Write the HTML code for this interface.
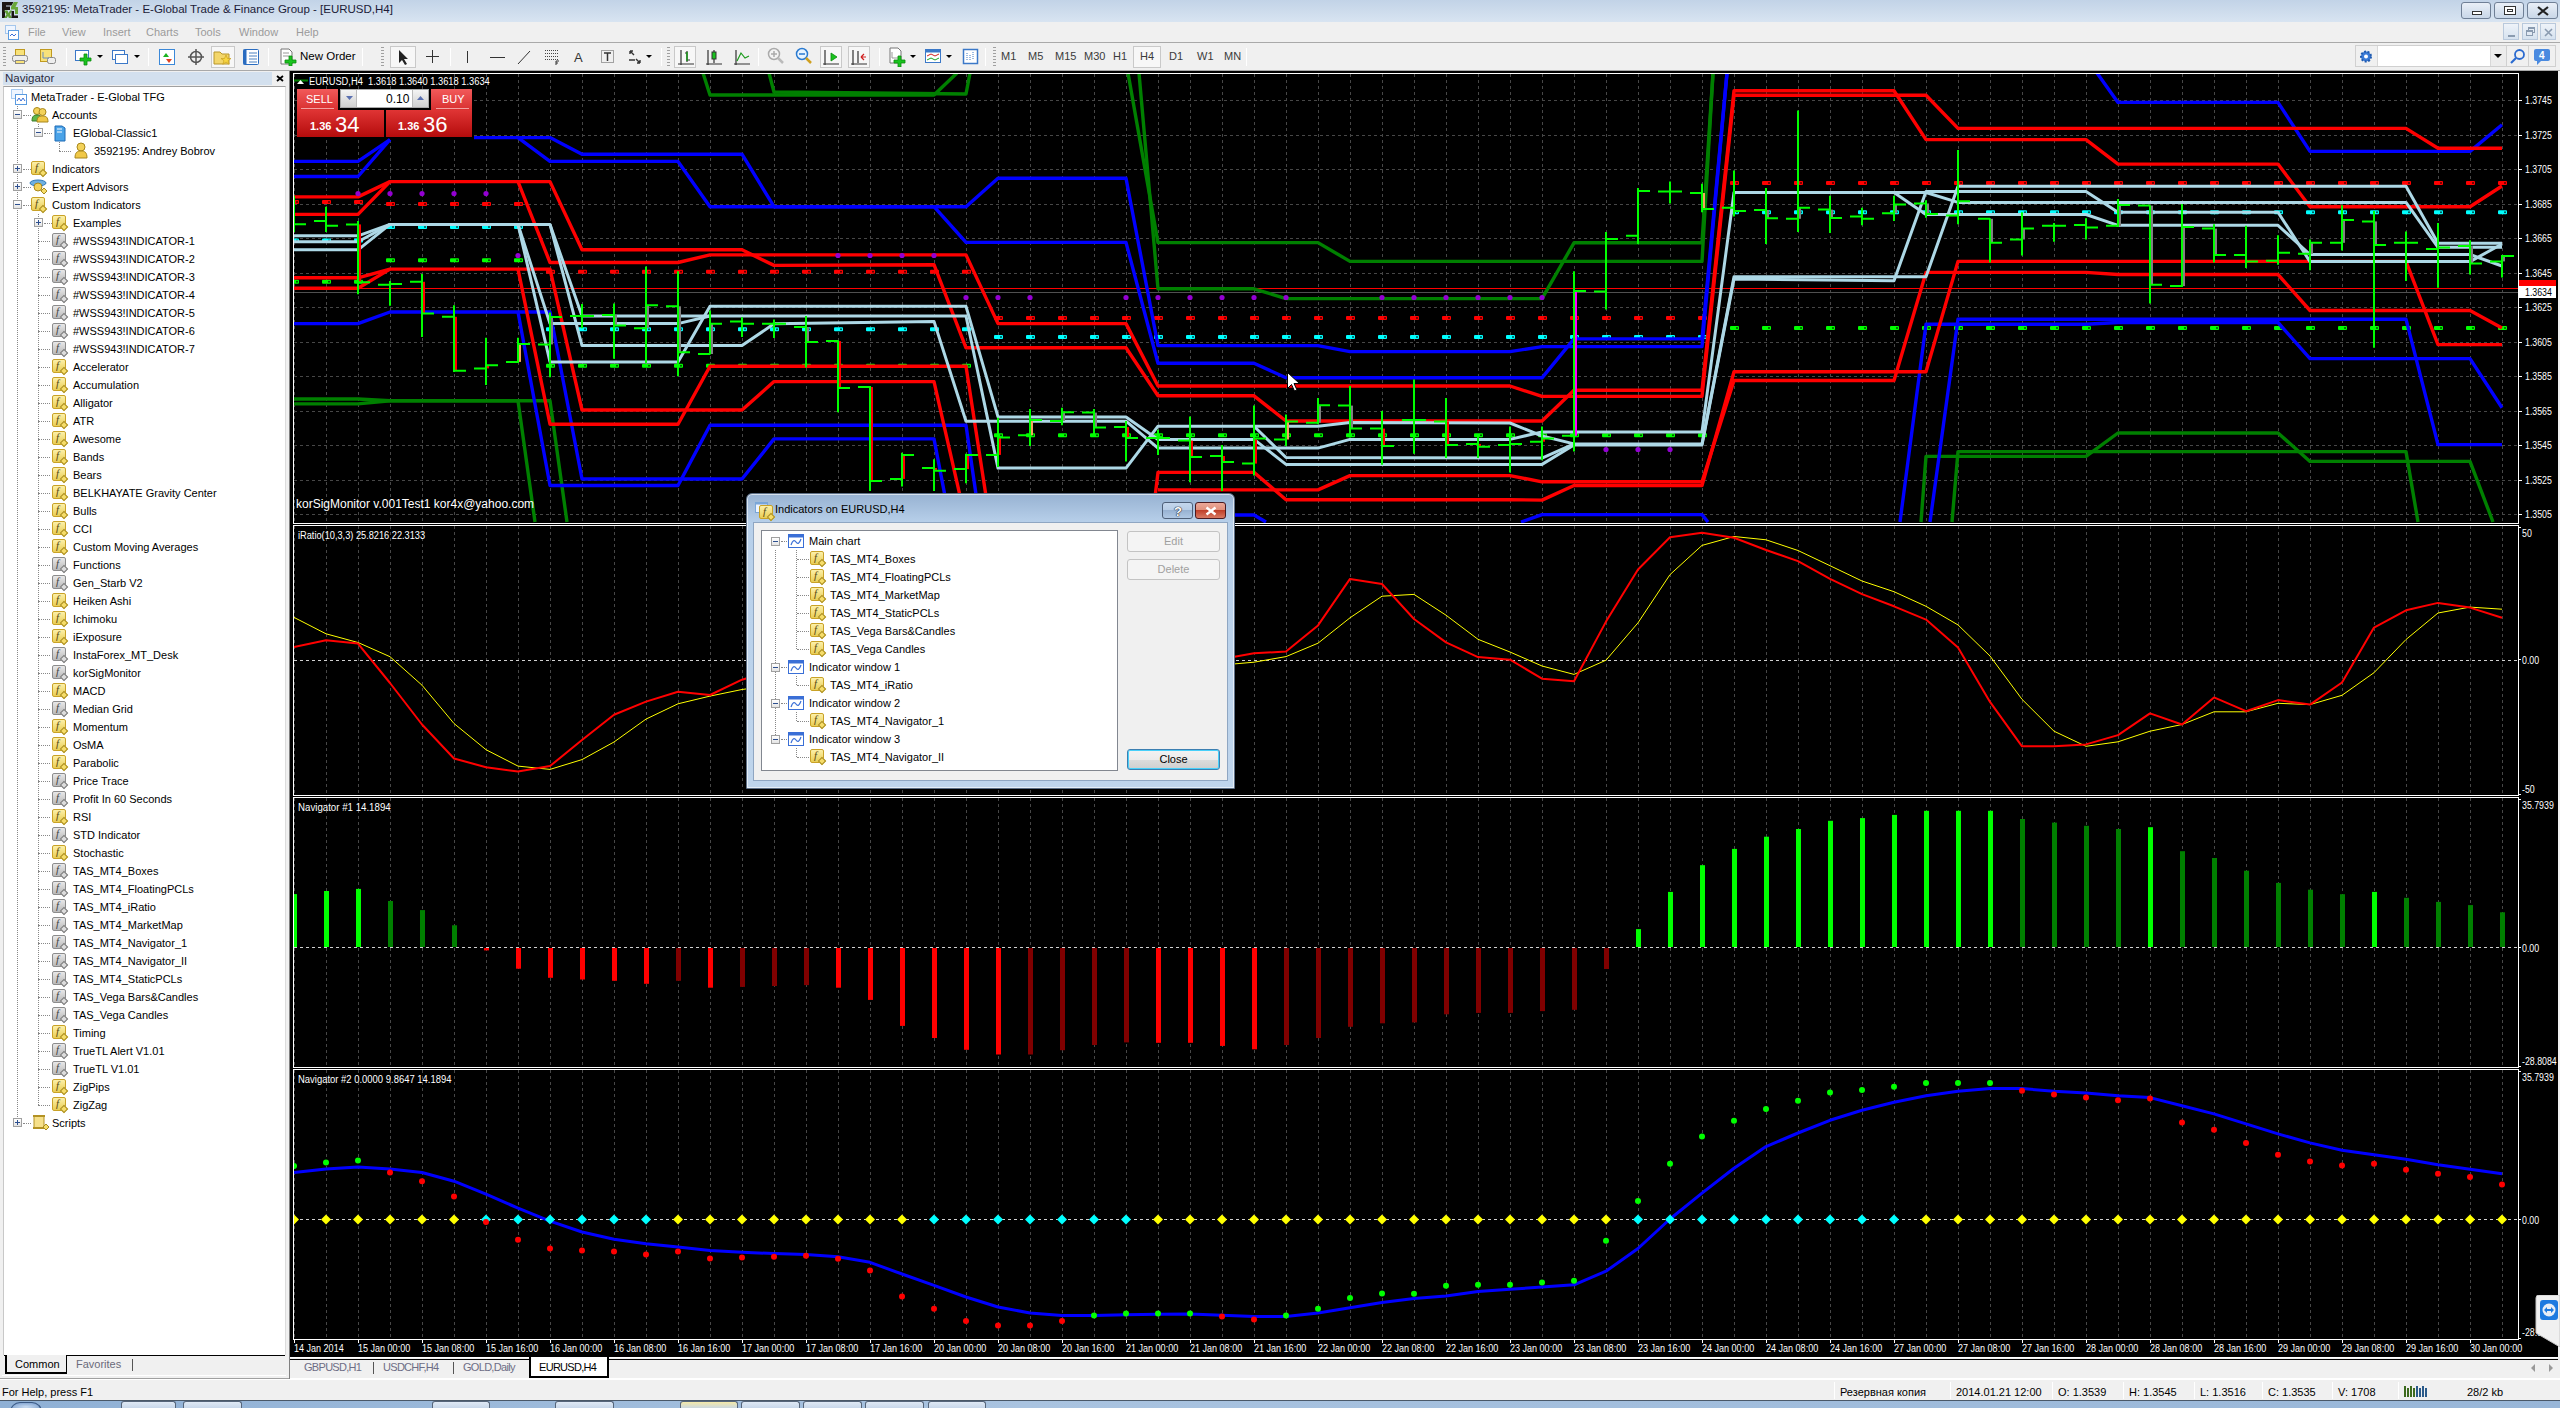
<!DOCTYPE html>
<html><head><meta charset="utf-8"><title>MetaTrader</title>
<style>
*{margin:0;padding:0;box-sizing:border-box}
html,body{width:2560px;height:1408px;overflow:hidden;background:#f0f0f0;font-family:'Liberation Sans',sans-serif;font-size:11px;color:#000;position:relative}
.a{position:absolute}
.tx{position:absolute;white-space:nowrap;line-height:1}
#title{left:0;top:0;width:2560px;height:22px;background:linear-gradient(#c2d3e7,#d8e4f1)}
#menu{left:0;top:22px;width:2560px;height:20px;background:#f0f0f0}
.mi{position:absolute;top:26px;font-size:11px;color:#9b9b9b;white-space:nowrap;line-height:12px}
#tb{left:0;top:42px;width:2560px;height:29px;background:#f0f0f0;border-top:1px solid #a9a9a9;border-bottom:1px solid #a9a9a9}
.sep{position:absolute;top:48px;width:1px;height:18px;background:#b0b0b0;border-right:1px solid #fff}
.grip{position:absolute;top:47px;width:3px;height:19px;background:repeating-linear-gradient(#a0a0a0 0 1px,transparent 1px 3px)}
.tf{position:absolute;top:51px;font-size:11px;color:#3b3b3b;line-height:11px}
.pressed{position:absolute;top:46px;height:22px;border:1px solid #c9c9c9;background:#f7f7f7}
#nav{left:0;top:71px;width:289px;height:1308px;background:#f0f0f0}
#navh{left:3px;top:72px;width:269px;height:13px;background:#d3e0ee}
#tree{left:3px;top:86px;width:283px;height:1269px;background:#fff;border-top:1px solid #a0a0a0;border-left:1px solid #c8c8c8;border-right:1px solid #dcdcdc}
.ti{position:absolute;font-size:11px;line-height:12px;white-space:nowrap;color:#000}
.fi{position:absolute;width:14px;height:14px;border-radius:2px;border:1px solid #c9a227;background:linear-gradient(#fcf0a8,#e9cd55)}
.fi.gr{border-color:#8c8c8c;background:linear-gradient(#e8e8e8,#b9b9b9)}
.fi i{position:absolute;left:3px;top:-1px;font:italic 11px 'Liberation Serif',serif;color:#5a4a10}
.fi.gr i{color:#444}
.fi b{position:absolute;left:8px;top:8px;width:6px;height:6px;transform:rotate(45deg);background:#f6dd6a;border:1px solid #a88b20}
.fi.gr b{background:#ddd;border-color:#777}
.ex{position:absolute;width:9px;height:9px;border:1px solid #a0a0a0;background:linear-gradient(#fff,#e4e4e4)}
.ex:before{content:"";position:absolute;left:1px;top:3px;width:5px;height:1px;background:#2d4f8f}
.ex.p:after{content:"";position:absolute;left:3px;top:1px;width:1px;height:5px;background:#2d4f8f}
.dv{position:absolute;border-left:1px dotted #888}
.dh{position:absolute;border-top:1px dotted #888;height:1px}
#tabs{left:290px;top:1357px;width:2270px;height:22px;background:#f0f0f0}
#status{left:0;top:1379px;width:2560px;height:22px;background:#f0f0f0}
.st{position:absolute;top:1386px;font-size:11px;line-height:12px;white-space:nowrap}
.ss{position:absolute;top:1382px;width:1px;height:17px;background:#b8b8b8;border-right:1px solid #fff}
#task{left:0;top:1400px;width:2560px;height:8px;background:linear-gradient(90deg,#8fb0d5,#a9c3e0 40%,#98b6d8)}
.wb{position:absolute;top:2px;height:17px;border:1px solid #6f7f95;border-radius:3px;background:linear-gradient(#e9eff7,#c9d7e8)}
.mdi{position:absolute;top:23px;width:16px;height:17px;border:1px solid #b9c9dc;background:linear-gradient(#eef3f9,#d6e2ef)}
.ax{font-size:11px}
.tl{font-size:11px}
.wl{font-size:11px}
</style></head>
<body>
<div id="title" class="a"></div>
<svg class="a" style="left:0;top:0" width="22" height="22" viewBox="0 0 22 22"><path d="M2 2H13.5L11.5 5.5H6V6.5H10V10H5V18H2Z" fill="#1a1614"/><path d="M14 2H18L15.5 7H18V14H15V9.5H11V7Z" fill="#6aa83a"/><path d="M4 10.5H7.5L8.5 13L10 10.5H12L10 14.5L12 18H8.8L8 16L6.8 18H4L6.5 14.5Z" fill="#5f9e35"/><path d="M11.5 11H14V15.5H18V18H11.5Z" fill="#1a1614"/></svg>
<div class="tx" style="left:22px;top:4px;font-size:11.5px;color:#1b1b38">3592195: MetaTrader - E-Global Trade &amp; Finance Group - [EURUSD,H4]</div>
<div class="wb" style="left:2461px;width:30px"><div class="a" style="left:10px;top:8px;width:10px;height:4px;border:1px solid #333;background:#fff"></div></div>
<div class="wb" style="left:2494px;width:30px"><div class="a" style="left:9px;top:3px;width:12px;height:9px;border:1px solid #333;background:#fff"><div class="a" style="left:2px;top:2px;width:6px;height:3px;border:1px solid #333"></div></div></div>
<div class="wb" style="left:2527px;width:31px"><svg class="a" style="left:9px;top:3px" width="12" height="10"><path d="M1 1l10 8M11 1L1 9" stroke="#222" stroke-width="2.2"/></svg></div>
<div id="menu" class="a"></div>
<svg class="a" style="left:4px;top:24px" width="16" height="16" viewBox="0 0 16 16"><rect x="1.5" y="1.5" width="10" height="8" fill="#eef5ff" stroke="#5a9be0" stroke-dasharray="1 1"/><rect x="4.5" y="6.5" width="10" height="9" fill="#fff" stroke="#5a9be0"/><path d="M6 12l2-2 2 2 2-2" fill="none" stroke="#3a6fd6"/></svg>
<div class="mi" style="left:28px">File</div>
<div class="mi" style="left:62px">View</div>
<div class="mi" style="left:103px">Insert</div>
<div class="mi" style="left:146px">Charts</div>
<div class="mi" style="left:195px">Tools</div>
<div class="mi" style="left:239px">Window</div>
<div class="mi" style="left:296px">Help</div>
<div class="mdi" style="left:2503px"><div class="a" style="left:4px;top:11px;width:7px;height:2px;background:#8a9bb0"></div></div>
<div class="mdi" style="left:2522px"><div class="a" style="left:5px;top:3px;width:7px;height:6px;border:1px solid #8a9bb0;border-top-width:2px"></div><div class="a" style="left:3px;top:6px;width:7px;height:6px;border:1px solid #8a9bb0;border-top-width:2px;background:#e2eaf4"></div></div>
<div class="mdi" style="left:2540px"><svg class="a" style="left:3px;top:4px" width="9" height="9"><path d="M1 1l7 7M8 1L1 8" stroke="#8a9bb0" stroke-width="1.6"/></svg></div>
<div id="tb" class="a"></div>
<div class="grip" style="left:3px"></div>
<div class="grip" style="left:381px"></div>
<div class="grip" style="left:667px"></div>
<div class="grip" style="left:993px"></div>
<div class="sep" style="left:66px"></div>
<div class="sep" style="left:148px"></div>
<div class="sep" style="left:268px"></div>
<div class="sep" style="left:362px"></div>
<div class="sep" style="left:450px"></div>
<div class="sep" style="left:661px"></div>
<div class="sep" style="left:758px"></div>
<div class="sep" style="left:879px"></div>
<div class="sep" style="left:985px"></div>
<div class="sep" style="left:1246px"></div>
<div class="pressed" style="left:211px;width:24px"></div>
<div class="pressed" style="left:390px;width:26px"></div>
<div class="pressed" style="left:674px;width:22px"></div>
<div class="pressed" style="left:820px;width:22px"></div>
<div class="pressed" style="left:848px;width:22px"></div>
<div class="pressed" style="left:1133px;width:28px"></div>
<svg class="a" style="left:11px;top:48px" width="18" height="18" viewBox="0 0 18 18"><rect x="4.5" y="1.5" width="9" height="7" fill="#f8e27a" stroke="#c09a20"/><rect x="1.5" y="7.5" width="15" height="6" rx="2" fill="#eee" stroke="#888"/><rect x="4.5" y="12.5" width="9" height="3" fill="#f8e27a" stroke="#888"/></svg>
<svg class="a" style="left:39px;top:48px" width="18" height="18" viewBox="0 0 18 18"><rect x="1.5" y="1.5" width="11" height="12" fill="#f8e27a" stroke="#c09a20"/><rect x="8.5" y="9.5" width="8" height="6" rx="2" fill="#eee" stroke="#888"/><path d="M4 4v6h6" fill="none" stroke="#6a8fc0"/></svg>
<svg class="a" style="left:74px;top:48px" width="18" height="18" viewBox="0 0 18 18"><rect x="1.5" y="2.5" width="13" height="10" fill="#fff" stroke="#3b78c8"/><path d="M10 6h3v4h4v3h-4v4h-3v-4H6v-3h4z" fill="#19c31e" stroke="#0a8a0e" stroke-width=".8"/></svg>
<svg class="a" style="left:97px;top:55px" width="6" height="4" viewBox="0 0 6 4"><path d="M0 0h6L3 3z" fill="#000"/></svg>
<svg class="a" style="left:111px;top:48px" width="18" height="18" viewBox="0 0 18 18"><rect x="1.5" y="2.5" width="12" height="9" fill="#fff" stroke="#3b78c8"/><rect x="4.5" y="6.5" width="12" height="9" fill="#fff" stroke="#3b78c8"/></svg>
<svg class="a" style="left:134px;top:55px" width="6" height="4" viewBox="0 0 6 4"><path d="M0 0h6L3 3z" fill="#000"/></svg>
<svg class="a" style="left:158px;top:48px" width="18" height="18" viewBox="0 0 18 18"><rect x="1.5" y="1.5" width="15" height="15" fill="#fff" stroke="#3b88d8"/><path d="M5 9l3-4 3 4z" fill="#19b31e"/><path d="M8 11l3 4 3-4z" fill="#e04020"/></svg>
<svg class="a" style="left:187px;top:48px" width="18" height="18" viewBox="0 0 18 18"><circle cx="9" cy="9" r="5.5" fill="none" stroke="#555" stroke-width="1.5"/><path d="M9 1v16M1 9h16" stroke="#555" stroke-width="1.5"/></svg>
<svg class="a" style="left:213px;top:48px" width="20" height="18" viewBox="0 0 20 18"><path d="M1 4h6l2 2h7v10H1z" fill="#f3d66a" stroke="#b8962a"/><path d="M13 7l1.5 3.5h3.5l-3 2.2 1.2 3.6-3.2-2.3-3.2 2.3 1.2-3.6-3-2.2h3.5z" fill="#f8d640" stroke="#c8a020" stroke-width=".7"/></svg>
<svg class="a" style="left:242px;top:48px" width="18" height="18" viewBox="0 0 18 18"><rect x="1.5" y="1.5" width="15" height="15" rx="1" fill="#fff" stroke="#2a6cc0"/><rect x="1.5" y="1.5" width="3" height="15" fill="#2a6cc0"/><path d="M7 5h8M7 8h8M7 11h8M7 14h8" stroke="#4a80c0"/></svg>
<svg class="a" style="left:279px;top:48px" width="18" height="18" viewBox="0 0 18 18"><path d="M2 1h8l3 3v12H2z" fill="#fff" stroke="#777"/><path d="M4 5h6M4 8h6" stroke="#999"/><path d="M10 8h3v4h4v3h-4v3h-3v-3H6v-3h4z" fill="#19c31e" stroke="#0a8a0e" stroke-width=".8"/></svg>
<div class="tx" style="left:300px;top:51px;font-size:11.5px;color:#000">New Order</div>
<svg class="a" style="left:396px;top:48px" width="14" height="18" viewBox="0 0 14 18"><path d="M3 2v13l3-3 3 5 2-1-3-5h4z" fill="#222"/></svg>
<svg class="a" style="left:424px;top:48px" width="17" height="17" viewBox="0 0 17 17"><path d="M8.5 2v13M2 8.5h13" stroke="#333"/></svg>
<svg class="a" style="left:466px;top:48px" width="4" height="18" viewBox="0 0 4 18"><path d="M1.5 3v12" stroke="#333"/></svg>
<svg class="a" style="left:489px;top:48px" width="17" height="18" viewBox="0 0 17 18"><path d="M1 9.5h15" stroke="#333"/></svg>
<svg class="a" style="left:516px;top:48px" width="16" height="18" viewBox="0 0 16 18"><path d="M2 16L14 3" stroke="#333"/></svg>
<svg class="a" style="left:544px;top:48px" width="17" height="18" viewBox="0 0 17 18"><path d="M1 2.5h14M1 5.5h14M1 8.5h14M1 11.5h14" stroke="#444" stroke-dasharray="1 1"/><path d="M12 13v4M12 13h3M12 15h2" stroke="#333"/></svg>
<div class="tx" style="left:574px;top:51px;font-size:13px;color:#333">A</div>
<svg class="a" style="left:600px;top:48px" width="16" height="18" viewBox="0 0 16 18"><rect x="1.5" y="2.5" width="12" height="12" fill="none" stroke="#555" stroke-dasharray="1 1"/><path d="M4 5h7M7.5 5v8" stroke="#333" stroke-width="1.5"/></svg>
<svg class="a" style="left:627px;top:48px" width="16" height="18" viewBox="0 0 16 18"><path d="M3 3l4 4M3 3v3M3 3h3M13 15l-4-4M13 15v-3M13 15h-3M2 12h6" stroke="#333" stroke-width="1.4"/></svg>
<svg class="a" style="left:646px;top:55px" width="6" height="4" viewBox="0 0 6 4"><path d="M0 0h6L3 3z" fill="#000"/></svg>
<svg class="a" style="left:677px;top:48px" width="18" height="18" viewBox="0 0 18 18"><path d="M4 2v15M1 16h16M10 3v11M10 5h-2M10 12h3" stroke="#333" stroke-width="1.2"/><path d="M10 4v9" stroke="#1a9a1a" stroke-width="1.5"/></svg>
<svg class="a" style="left:705px;top:48px" width="18" height="18" viewBox="0 0 18 18"><path d="M3 2v15M1 16h16M9 2v13" stroke="#333" stroke-width="1.2"/><rect x="7" y="4" width="4" height="7" fill="#19c31e" stroke="#333"/></svg>
<svg class="a" style="left:733px;top:48px" width="18" height="18" viewBox="0 0 18 18"><path d="M3 2v15M1 16h16" stroke="#333" stroke-width="1.2"/><path d="M4 13l4-8 4 5 4-2" fill="none" stroke="#1a9a1a" stroke-width="1.2"/></svg>
<svg class="a" style="left:767px;top:47px" width="18" height="18" viewBox="0 0 18 18"><circle cx="7" cy="7" r="5.5" fill="#f4f4f4" stroke="#aaa" stroke-width="1.5"/><path d="M4 7h6M7 4v6" stroke="#aaa" stroke-width="1.5"/><path d="M11 11l5 5" stroke="#bbb" stroke-width="2.5"/></svg>
<svg class="a" style="left:795px;top:47px" width="18" height="18" viewBox="0 0 18 18"><circle cx="7" cy="7" r="5.5" fill="#e8f4ff" stroke="#2a7ad0" stroke-width="1.5"/><path d="M4 7h6" stroke="#2a7ad0" stroke-width="1.5"/><path d="M11 11l5 5" stroke="#d0a020" stroke-width="2.5"/></svg>
<svg class="a" style="left:822px;top:48px" width="18" height="18" viewBox="0 0 18 18"><path d="M3 2v15M1 16h16" stroke="#333" stroke-width="1.2"/><path d="M9 5l6 4-6 4z" fill="#19c31e" stroke="#0a8a0e" stroke-width=".8"/></svg>
<svg class="a" style="left:850px;top:48px" width="18" height="18" viewBox="0 0 18 18"><path d="M3 2v15M1 16h16M8 3v12" stroke="#333" stroke-width="1.2"/><path d="M16 9h-5M11 9l3-3M11 9l3 3" stroke="#d02020" stroke-width="1.2"/></svg>
<svg class="a" style="left:888px;top:47px" width="20" height="20" viewBox="0 0 20 20"><path d="M2 1h8l3 3v12H2z" fill="#fff" stroke="#777"/><path d="M4 5v6h6" stroke="#999" fill="none"/><path d="M10 9h3v4h4v3h-4v4h-3v-4H6v-3h4z" fill="#19c31e" stroke="#0a8a0e" stroke-width=".8"/></svg>
<svg class="a" style="left:910px;top:55px" width="6" height="4" viewBox="0 0 6 4"><path d="M0 0h6L3 3z" fill="#000"/></svg>
<svg class="a" style="left:924px;top:48px" width="18" height="17" viewBox="0 0 18 17"><rect x="1.5" y="1.5" width="15" height="13" fill="#fff" stroke="#3b78c8"/><rect x="1.5" y="1.5" width="15" height="3" fill="#3b78c8"/><path d="M3 8l4-2 4 2 4-2" stroke="#d02020" fill="none"/><path d="M3 12l4-2 4 2 4-2" stroke="#19a31e" fill="none"/></svg>
<svg class="a" style="left:946px;top:55px" width="6" height="4" viewBox="0 0 6 4"><path d="M0 0h6L3 3z" fill="#000"/></svg>
<svg class="a" style="left:962px;top:48px" width="17" height="17" viewBox="0 0 17 17"><rect x="1.5" y="1.5" width="14" height="14" fill="#fff" stroke="#3b78c8" stroke-width="1.5"/><path d="M5 5v8M8 7v5M11 4v7" stroke="#3b78c8" stroke-dasharray="1 1"/></svg>
<div class="tf" style="left:1001px">M1</div>
<div class="tf" style="left:1028px">M5</div>
<div class="tf" style="left:1055px">M15</div>
<div class="tf" style="left:1084px">M30</div>
<div class="tf" style="left:1113px">H1</div>
<div class="tf" style="left:1140px">H4</div>
<div class="tf" style="left:1169px">D1</div>
<div class="tf" style="left:1197px">W1</div>
<div class="tf" style="left:1224px">MN</div>
<div class="a" style="left:2355px;top:45px;width:201px;height:22px;border:1px solid #d0d0d0;background:#f0f0f0"></div>
<svg class="a" style="left:2357px;top:48px" width="18" height="17" viewBox="0 0 18 17"><circle cx="9" cy="8.5" r="5" fill="#3a7ad6" stroke="#1f5bb0" stroke-width="2" stroke-dasharray="2 1.5"/><circle cx="9" cy="8.5" r="2" fill="#fff"/></svg>
<div class="a" style="left:2377px;top:46px;width:113px;height:20px;background:#fff;border-left:1px solid #d8d8d8"></div>
<div class="a" style="left:2490px;top:46px;width:16px;height:20px;background:#ececec;border-left:1px solid #d8d8d8"></div>
<svg class="a" style="left:2494px;top:54px" width="8" height="5" viewBox="0 0 8 5"><path d="M0 0h8L4 4z" fill="#000"/></svg>
<div class="a" style="left:2506px;top:46px;width:1px;height:20px;background:#d0d0d0"></div>
<svg class="a" style="left:2509px;top:48px" width="18" height="17" viewBox="0 0 18 17"><circle cx="10.5" cy="6.5" r="4.5" fill="none" stroke="#2a6ad0" stroke-width="1.8"/><path d="M7 10l-5 5" stroke="#2a6ad0" stroke-width="2.2"/></svg>
<div class="a" style="left:2528px;top:46px;width:1px;height:20px;background:#d0d0d0"></div>
<svg class="a" style="left:2533px;top:48px" width="18" height="18" viewBox="0 0 18 18"><rect x="1" y="1" width="16" height="12" rx="2" fill="#4a8ae0"/><path d="M4 13v4l4-4" fill="#4a8ae0"/><text x="6" y="11" font-size="10" font-family="Liberation Sans" font-weight="bold" fill="#fff">4</text></svg>
<div id="nav" class="a"></div>
<div id="navh" class="a"></div>
<div class="tx" style="left:5px;top:73px;font-size:11.5px;color:#2a2a40">Navigator</div>
<svg class="a" style="left:276px;top:75px" width="8" height="7"><path d="M1 1l6 5M7 1L1 6" stroke="#000" stroke-width="1.8"/></svg>
<div id="tree" class="a"></div>
<svg class="a" style="left:10px;top:88px" width="18" height="18" viewBox="0 0 18 18"><rect x="1.5" y="1.5" width="11" height="9" fill="#eef5ff" stroke="#5a9be0" stroke-dasharray="1 1"/><rect x="5.5" y="6.5" width="11" height="10" fill="#fff" stroke="#5a9be0"/><path d="M7 13l2-3 2 3 2-3 2 3" fill="none" stroke="#3a6fd6"/></svg>
<div class="ti" style="left:31px;top:91px">MetaTrader - E-Global TFG</div>
<div class="dv" style="left:17px;top:106px;height:1017px"></div>
<div class="dv" style="left:38px;top:124px;height:9px"></div>
<div class="dv" style="left:59px;top:142px;height:9px"></div>
<div class="dv" style="left:38px;top:214px;height:891px"></div>
<div class="ex" style="left:13px;top:110px"></div>
<div class="dh" style="left:23px;top:115px;width:8px"></div>
<svg class="a" style="left:31px;top:106px" width="18" height="17" viewBox="0 0 18 17"><circle cx="6" cy="5" r="3.5" fill="#f3d25a" stroke="#a8871c"/><path d="M1 15c0-5 2-6 5-6s5 1 5 6z" fill="#5fb84a" stroke="#3a7a2a"/><circle cx="11.5" cy="6" r="3.5" fill="#f3d25a" stroke="#a8871c"/><path d="M6 16c0-5 2-6 5.5-6s5.5 1 5.5 6z" fill="#f0c848" stroke="#a8871c"/></svg>
<div class="ti" style="left:52px;top:109px">Accounts</div>
<div class="ex" style="left:34px;top:128px"></div>
<div class="dh" style="left:44px;top:133px;width:8px"></div>
<svg class="a" style="left:53px;top:124px" width="14" height="18" viewBox="0 0 14 18"><path d="M2 2h7l3 2v13H2z" fill="#4aa3e8" stroke="#1f6bb5"/><path d="M4 5h5M4 8h5" stroke="#fff"/></svg>
<div class="ti" style="left:73px;top:127px">EGlobal-Classic1</div>
<div class="dh" style="left:59px;top:151px;width:12px"></div>
<svg class="a" style="left:73px;top:142px" width="16" height="17" viewBox="0 0 16 17"><circle cx="8" cy="5" r="4" fill="#f3d25a" stroke="#a8871c"/><path d="M2 16c0-6 2.5-7 6-7s6 1 6 7z" fill="#f0c848" stroke="#a8871c"/></svg>
<div class="ti" style="left:94px;top:145px">3592195: Andrey Bobrov</div>
<div class="ex p" style="left:13px;top:164px"></div>
<div class="dh" style="left:23px;top:169px;width:8px"></div>
<div class="fi" style="left:31px;top:161px"><i>f</i><b></b></div>
<div class="ti" style="left:52px;top:163px">Indicators</div>
<div class="ex p" style="left:13px;top:182px"></div>
<div class="dh" style="left:23px;top:187px;width:8px"></div>
<svg class="a" style="left:29px;top:178px" width="20" height="18" viewBox="0 0 20 18"><ellipse cx="9" cy="5" rx="8" ry="3" fill="#6fb0e0" stroke="#2f78b8"/><circle cx="9" cy="9" r="4" fill="#f3d25a" stroke="#a8871c"/><path d="M12 13l3-3 3 3-3 3z" fill="#f6dd6a" stroke="#a88b20"/></svg>
<div class="ti" style="left:52px;top:181px">Expert Advisors</div>
<div class="ex" style="left:13px;top:200px"></div>
<div class="dh" style="left:23px;top:205px;width:8px"></div>
<div class="fi" style="left:31px;top:197px"><i>f</i><b></b></div>
<div class="ti" style="left:52px;top:199px">Custom Indicators</div>
<div class="ex p" style="left:34px;top:218px"></div>
<div class="dh" style="left:44px;top:223px;width:8px"></div>
<div class="fi" style="left:52px;top:215px"><i>f</i><b></b></div>
<div class="ti" style="left:73px;top:217px">Examples</div>
<div class="dh" style="left:38px;top:241px;width:12px"></div>
<div class="fi gr" style="left:52px;top:233px"><i>f</i><b></b></div>
<div class="ti" style="left:73px;top:235px">#WSS943!INDICATOR-1</div>
<div class="dh" style="left:38px;top:259px;width:12px"></div>
<div class="fi gr" style="left:52px;top:251px"><i>f</i><b></b></div>
<div class="ti" style="left:73px;top:253px">#WSS943!INDICATOR-2</div>
<div class="dh" style="left:38px;top:277px;width:12px"></div>
<div class="fi gr" style="left:52px;top:269px"><i>f</i><b></b></div>
<div class="ti" style="left:73px;top:271px">#WSS943!INDICATOR-3</div>
<div class="dh" style="left:38px;top:295px;width:12px"></div>
<div class="fi gr" style="left:52px;top:287px"><i>f</i><b></b></div>
<div class="ti" style="left:73px;top:289px">#WSS943!INDICATOR-4</div>
<div class="dh" style="left:38px;top:313px;width:12px"></div>
<div class="fi gr" style="left:52px;top:305px"><i>f</i><b></b></div>
<div class="ti" style="left:73px;top:307px">#WSS943!INDICATOR-5</div>
<div class="dh" style="left:38px;top:331px;width:12px"></div>
<div class="fi gr" style="left:52px;top:323px"><i>f</i><b></b></div>
<div class="ti" style="left:73px;top:325px">#WSS943!INDICATOR-6</div>
<div class="dh" style="left:38px;top:349px;width:12px"></div>
<div class="fi gr" style="left:52px;top:341px"><i>f</i><b></b></div>
<div class="ti" style="left:73px;top:343px">#WSS943!INDICATOR-7</div>
<div class="dh" style="left:38px;top:367px;width:12px"></div>
<div class="fi" style="left:52px;top:359px"><i>f</i><b></b></div>
<div class="ti" style="left:73px;top:361px">Accelerator</div>
<div class="dh" style="left:38px;top:385px;width:12px"></div>
<div class="fi" style="left:52px;top:377px"><i>f</i><b></b></div>
<div class="ti" style="left:73px;top:379px">Accumulation</div>
<div class="dh" style="left:38px;top:403px;width:12px"></div>
<div class="fi" style="left:52px;top:395px"><i>f</i><b></b></div>
<div class="ti" style="left:73px;top:397px">Alligator</div>
<div class="dh" style="left:38px;top:421px;width:12px"></div>
<div class="fi" style="left:52px;top:413px"><i>f</i><b></b></div>
<div class="ti" style="left:73px;top:415px">ATR</div>
<div class="dh" style="left:38px;top:439px;width:12px"></div>
<div class="fi" style="left:52px;top:431px"><i>f</i><b></b></div>
<div class="ti" style="left:73px;top:433px">Awesome</div>
<div class="dh" style="left:38px;top:457px;width:12px"></div>
<div class="fi" style="left:52px;top:449px"><i>f</i><b></b></div>
<div class="ti" style="left:73px;top:451px">Bands</div>
<div class="dh" style="left:38px;top:475px;width:12px"></div>
<div class="fi" style="left:52px;top:467px"><i>f</i><b></b></div>
<div class="ti" style="left:73px;top:469px">Bears</div>
<div class="dh" style="left:38px;top:493px;width:12px"></div>
<div class="fi" style="left:52px;top:485px"><i>f</i><b></b></div>
<div class="ti" style="left:73px;top:487px">BELKHAYATE Gravity Center</div>
<div class="dh" style="left:38px;top:511px;width:12px"></div>
<div class="fi" style="left:52px;top:503px"><i>f</i><b></b></div>
<div class="ti" style="left:73px;top:505px">Bulls</div>
<div class="dh" style="left:38px;top:529px;width:12px"></div>
<div class="fi" style="left:52px;top:521px"><i>f</i><b></b></div>
<div class="ti" style="left:73px;top:523px">CCI</div>
<div class="dh" style="left:38px;top:547px;width:12px"></div>
<div class="fi" style="left:52px;top:539px"><i>f</i><b></b></div>
<div class="ti" style="left:73px;top:541px">Custom Moving Averages</div>
<div class="dh" style="left:38px;top:565px;width:12px"></div>
<div class="fi gr" style="left:52px;top:557px"><i>f</i><b></b></div>
<div class="ti" style="left:73px;top:559px">Functions</div>
<div class="dh" style="left:38px;top:583px;width:12px"></div>
<div class="fi gr" style="left:52px;top:575px"><i>f</i><b></b></div>
<div class="ti" style="left:73px;top:577px">Gen_Starb V2</div>
<div class="dh" style="left:38px;top:601px;width:12px"></div>
<div class="fi" style="left:52px;top:593px"><i>f</i><b></b></div>
<div class="ti" style="left:73px;top:595px">Heiken Ashi</div>
<div class="dh" style="left:38px;top:619px;width:12px"></div>
<div class="fi" style="left:52px;top:611px"><i>f</i><b></b></div>
<div class="ti" style="left:73px;top:613px">Ichimoku</div>
<div class="dh" style="left:38px;top:637px;width:12px"></div>
<div class="fi" style="left:52px;top:629px"><i>f</i><b></b></div>
<div class="ti" style="left:73px;top:631px">iExposure</div>
<div class="dh" style="left:38px;top:655px;width:12px"></div>
<div class="fi gr" style="left:52px;top:647px"><i>f</i><b></b></div>
<div class="ti" style="left:73px;top:649px">InstaForex_MT_Desk</div>
<div class="dh" style="left:38px;top:673px;width:12px"></div>
<div class="fi gr" style="left:52px;top:665px"><i>f</i><b></b></div>
<div class="ti" style="left:73px;top:667px">korSigMonitor</div>
<div class="dh" style="left:38px;top:691px;width:12px"></div>
<div class="fi" style="left:52px;top:683px"><i>f</i><b></b></div>
<div class="ti" style="left:73px;top:685px">MACD</div>
<div class="dh" style="left:38px;top:709px;width:12px"></div>
<div class="fi gr" style="left:52px;top:701px"><i>f</i><b></b></div>
<div class="ti" style="left:73px;top:703px">Median Grid</div>
<div class="dh" style="left:38px;top:727px;width:12px"></div>
<div class="fi" style="left:52px;top:719px"><i>f</i><b></b></div>
<div class="ti" style="left:73px;top:721px">Momentum</div>
<div class="dh" style="left:38px;top:745px;width:12px"></div>
<div class="fi" style="left:52px;top:737px"><i>f</i><b></b></div>
<div class="ti" style="left:73px;top:739px">OsMA</div>
<div class="dh" style="left:38px;top:763px;width:12px"></div>
<div class="fi" style="left:52px;top:755px"><i>f</i><b></b></div>
<div class="ti" style="left:73px;top:757px">Parabolic</div>
<div class="dh" style="left:38px;top:781px;width:12px"></div>
<div class="fi gr" style="left:52px;top:773px"><i>f</i><b></b></div>
<div class="ti" style="left:73px;top:775px">Price Trace</div>
<div class="dh" style="left:38px;top:799px;width:12px"></div>
<div class="fi gr" style="left:52px;top:791px"><i>f</i><b></b></div>
<div class="ti" style="left:73px;top:793px">Profit In 60 Seconds</div>
<div class="dh" style="left:38px;top:817px;width:12px"></div>
<div class="fi" style="left:52px;top:809px"><i>f</i><b></b></div>
<div class="ti" style="left:73px;top:811px">RSI</div>
<div class="dh" style="left:38px;top:835px;width:12px"></div>
<div class="fi gr" style="left:52px;top:827px"><i>f</i><b></b></div>
<div class="ti" style="left:73px;top:829px">STD Indicator</div>
<div class="dh" style="left:38px;top:853px;width:12px"></div>
<div class="fi" style="left:52px;top:845px"><i>f</i><b></b></div>
<div class="ti" style="left:73px;top:847px">Stochastic</div>
<div class="dh" style="left:38px;top:871px;width:12px"></div>
<div class="fi gr" style="left:52px;top:863px"><i>f</i><b></b></div>
<div class="ti" style="left:73px;top:865px">TAS_MT4_Boxes</div>
<div class="dh" style="left:38px;top:889px;width:12px"></div>
<div class="fi gr" style="left:52px;top:881px"><i>f</i><b></b></div>
<div class="ti" style="left:73px;top:883px">TAS_MT4_FloatingPCLs</div>
<div class="dh" style="left:38px;top:907px;width:12px"></div>
<div class="fi gr" style="left:52px;top:899px"><i>f</i><b></b></div>
<div class="ti" style="left:73px;top:901px">TAS_MT4_iRatio</div>
<div class="dh" style="left:38px;top:925px;width:12px"></div>
<div class="fi gr" style="left:52px;top:917px"><i>f</i><b></b></div>
<div class="ti" style="left:73px;top:919px">TAS_MT4_MarketMap</div>
<div class="dh" style="left:38px;top:943px;width:12px"></div>
<div class="fi gr" style="left:52px;top:935px"><i>f</i><b></b></div>
<div class="ti" style="left:73px;top:937px">TAS_MT4_Navigator_1</div>
<div class="dh" style="left:38px;top:961px;width:12px"></div>
<div class="fi gr" style="left:52px;top:953px"><i>f</i><b></b></div>
<div class="ti" style="left:73px;top:955px">TAS_MT4_Navigator_II</div>
<div class="dh" style="left:38px;top:979px;width:12px"></div>
<div class="fi gr" style="left:52px;top:971px"><i>f</i><b></b></div>
<div class="ti" style="left:73px;top:973px">TAS_MT4_StaticPCLs</div>
<div class="dh" style="left:38px;top:997px;width:12px"></div>
<div class="fi gr" style="left:52px;top:989px"><i>f</i><b></b></div>
<div class="ti" style="left:73px;top:991px">TAS_Vega Bars&amp;Candles</div>
<div class="dh" style="left:38px;top:1015px;width:12px"></div>
<div class="fi gr" style="left:52px;top:1007px"><i>f</i><b></b></div>
<div class="ti" style="left:73px;top:1009px">TAS_Vega Candles</div>
<div class="dh" style="left:38px;top:1033px;width:12px"></div>
<div class="fi" style="left:52px;top:1025px"><i>f</i><b></b></div>
<div class="ti" style="left:73px;top:1027px">Timing</div>
<div class="dh" style="left:38px;top:1051px;width:12px"></div>
<div class="fi gr" style="left:52px;top:1043px"><i>f</i><b></b></div>
<div class="ti" style="left:73px;top:1045px">TrueTL Alert V1.01</div>
<div class="dh" style="left:38px;top:1069px;width:12px"></div>
<div class="fi gr" style="left:52px;top:1061px"><i>f</i><b></b></div>
<div class="ti" style="left:73px;top:1063px">TrueTL V1.01</div>
<div class="dh" style="left:38px;top:1087px;width:12px"></div>
<div class="fi" style="left:52px;top:1079px"><i>f</i><b></b></div>
<div class="ti" style="left:73px;top:1081px">ZigPips</div>
<div class="dh" style="left:38px;top:1105px;width:12px"></div>
<div class="fi" style="left:52px;top:1097px"><i>f</i><b></b></div>
<div class="ti" style="left:73px;top:1099px">ZigZag</div>
<div class="ex p" style="left:13px;top:1118px"></div>
<div class="dh" style="left:23px;top:1123px;width:8px"></div>
<svg class="a" style="left:31px;top:1114px" width="18" height="18" viewBox="0 0 18 18"><path d="M3 2h10v12H3z" fill="#f6e08a" stroke="#b39224"/><path d="M2 2h12M2 14h12" stroke="#b39224" stroke-width="2"/><path d="M12 13l3-3 3 3-3 3z" fill="#f6dd6a" stroke="#a88b20"/></svg>
<div class="ti" style="left:52px;top:1117px">Scripts</div>
<div class="a" style="left:4px;top:1355px;width:281px;height:1px;background:#000"></div>
<div class="a" style="left:5px;top:1355px;width:62px;height:19px;background:#f0f0f0;border:1px solid #000;border-top:none;border-width:0 1px 2px 2px"></div>
<div class="tx" style="left:15px;top:1359px;font-size:11px;color:#000">Common</div>
<div class="tx" style="left:76px;top:1359px;font-size:11px;color:#6a6a7a">Favorites</div>
<div class="a" style="left:132px;top:1359px;width:1px;height:12px;background:#555"></div>
<div class="a" style="left:2px;top:1375px;width:284px;height:1px;background:#fff"></div>
<div class="a" style="left:0;top:1378px;width:290px;height:1px;background:#a0a0a0"></div>
<div class="a" style="left:289px;top:71px;width:1px;height:1308px;background:#808080"></div>
<div id="tabs" class="a"></div>
<div class="a" style="left:290px;top:1357px;width:2268px;height:1px;background:#fff"></div>
<div class="a" style="left:290px;top:1359px;width:2268px;height:1px;background:#000"></div>
<div class="a" style="left:529px;top:1357px;width:80px;height:21px;background:#fff;border:1px solid #000;border-top:none;border-width:0 2px 2px 2px"></div>
<div class="a" style="left:290px;top:1378px;width:2270px;height:1px;background:#fff"></div>
<div class="tx" style="left:304px;top:1362px;font-size:11px;letter-spacing:-0.7px;color:#6d6d85">GBPUSD,H1</div>
<div class="tx" style="left:383px;top:1362px;font-size:11px;letter-spacing:-0.7px;color:#6d6d85">USDCHF,H4</div>
<div class="tx" style="left:463px;top:1362px;font-size:11px;letter-spacing:-0.7px;color:#6d6d85">GOLD,Daily</div>
<div class="tx" style="left:539px;top:1362px;font-size:11px;letter-spacing:-0.7px;color:#000">EURUSD,H4</div>
<div class="a" style="left:373px;top:1362px;width:1px;height:12px;background:#555"></div>
<div class="a" style="left:453px;top:1362px;width:1px;height:12px;background:#555"></div>
<svg class="a" style="left:2530px;top:1364px" width="24" height="9"><path d="M5 0v8L1 4z" fill="#999"/><path d="M19 0v8l4-4z" fill="#999"/></svg>
<div id="status" class="a"></div>
<div class="a" style="left:0;top:1379px;width:2560px;height:1px;background:#fff"></div>
<div class="st" style="left:2px">For Help, press F1</div>
<div class="ss" style="left:1834px"></div>
<div class="ss" style="left:1950px"></div>
<div class="ss" style="left:2052px"></div>
<div class="ss" style="left:2123px"></div>
<div class="ss" style="left:2194px"></div>
<div class="ss" style="left:2262px"></div>
<div class="ss" style="left:2332px"></div>
<div class="ss" style="left:2398px"></div>
<div class="st" style="left:1840px">Резервная копия</div>
<div class="st" style="left:1956px">2014.01.21 12:00</div>
<div class="st" style="left:2058px">O: 1.3539</div>
<div class="st" style="left:2129px">H: 1.3545</div>
<div class="st" style="left:2200px">L: 1.3516</div>
<div class="st" style="left:2268px">C: 1.3535</div>
<div class="st" style="left:2338px">V: 1708</div>
<div class="st" style="left:2467px">28/2 kb</div>
<svg class="a" style="left:2404px;top:1385px" width="24" height="12"><rect x="0" y="1" width="2" height="11" fill="#3d6a1e"/><rect x="3" y="3" width="2" height="9" fill="#3d6a1e"/><rect x="6" y="1" width="2" height="11" fill="#3d6a1e"/><rect x="9" y="3" width="2" height="9" fill="#3d6a1e"/><rect x="12" y="1" width="2" height="11" fill="#2a5a8a"/><rect x="15" y="3" width="2" height="9" fill="#2a5a8a"/><rect x="18" y="1" width="2" height="11" fill="#2a5a8a"/><rect x="21" y="3" width="2" height="9" fill="#2a5a8a"/></svg>
<div id="task" class="a"></div>
<div class="a" style="left:0;top:1400px;width:2560px;height:1px;background:#4a5868"></div>
<div class="a" style="left:10px;top:1402px;width:32px;height:10px;border-radius:16px 16px 0 0;border:1px solid #3b5a86;background:radial-gradient(#c9dcf2,#6e95c8)"></div>
<div class="a" style="left:121px;top:1401px;width:55px;height:8px;border:1px solid #56657a;border-bottom:none;border-radius:3px 3px 0 0;background:linear-gradient(#dfe9f5,#c4d4e8)"></div>
<div class="a" style="left:183px;top:1401px;width:59px;height:8px;border:1px solid #56657a;border-bottom:none;border-radius:3px 3px 0 0;background:linear-gradient(#dfe9f5,#c4d4e8)"></div>
<div class="a" style="left:432px;top:1401px;width:58px;height:8px;border:1px solid #56657a;border-bottom:none;border-radius:3px 3px 0 0;background:linear-gradient(#dfe9f5,#c4d4e8)"></div>
<div class="a" style="left:555px;top:1401px;width:59px;height:8px;border:1px solid #56657a;border-bottom:none;border-radius:3px 3px 0 0;background:linear-gradient(#dfe9f5,#c4d4e8)"></div>
<div class="a" style="left:680px;top:1401px;width:58px;height:8px;border:1px solid #56657a;border-bottom:none;border-radius:3px 3px 0 0;background:linear-gradient(#f4e9a8,#c4d4e8)"></div>
<div class="a" style="left:741px;top:1401px;width:59px;height:8px;border:1px solid #56657a;border-bottom:none;border-radius:3px 3px 0 0;background:linear-gradient(#dfe9f5,#c4d4e8)"></div>
<div class="a" style="left:803px;top:1401px;width:59px;height:8px;border:1px solid #56657a;border-bottom:none;border-radius:3px 3px 0 0;background:linear-gradient(#dfe9f5,#c4d4e8)"></div>
<div class="a" style="left:865px;top:1401px;width:59px;height:8px;border:1px solid #56657a;border-bottom:none;border-radius:3px 3px 0 0;background:linear-gradient(#dfe9f5,#c4d4e8)"></div>
<div class="a" style="left:928px;top:1401px;width:58px;height:8px;border:1px solid #56657a;border-bottom:none;border-radius:3px 3px 0 0;background:linear-gradient(#dfe9f5,#c4d4e8)"></div>
<svg id="chart" width="2268" height="1286" viewBox="290 71 2268 1286" style="position:absolute;left:290px;top:71px">
<rect x="290" y="71" width="2268" height="1286" fill="#000"/>
<path d="M294.5 74V523M326.5 74V523M358.5 74V523M390.5 74V523M422.5 74V523M454.5 74V523M486.5 74V523M518.5 74V523M550.5 74V523M582.5 74V523M614.5 74V523M646.5 74V523M678.5 74V523M710.5 74V523M742.5 74V523M774.5 74V523M806.5 74V523M838.5 74V523M870.5 74V523M902.5 74V523M934.5 74V523M966.5 74V523M998.5 74V523M1030.5 74V523M1062.5 74V523M1094.5 74V523M1126.5 74V523M1158.5 74V523M1190.5 74V523M1222.5 74V523M1254.5 74V523M1286.5 74V523M1318.5 74V523M1350.5 74V523M1382.5 74V523M1414.5 74V523M1446.5 74V523M1478.5 74V523M1510.5 74V523M1542.5 74V523M1574.5 74V523M1606.5 74V523M1638.5 74V523M1670.5 74V523M1702.5 74V523M1734.5 74V523M1766.5 74V523M1798.5 74V523M1830.5 74V523M1862.5 74V523M1894.5 74V523M1926.5 74V523M1958.5 74V523M1990.5 74V523M2022.5 74V523M2054.5 74V523M2086.5 74V523M2118.5 74V523M2150.5 74V523M2182.5 74V523M2214.5 74V523M2246.5 74V523M2278.5 74V523M2310.5 74V523M2342.5 74V523M2374.5 74V523M2406.5 74V523M2438.5 74V523M2470.5 74V523M2502.5 74V523M294.5 526V795M326.5 526V795M358.5 526V795M390.5 526V795M422.5 526V795M454.5 526V795M486.5 526V795M518.5 526V795M550.5 526V795M582.5 526V795M614.5 526V795M646.5 526V795M678.5 526V795M710.5 526V795M742.5 526V795M774.5 526V795M806.5 526V795M838.5 526V795M870.5 526V795M902.5 526V795M934.5 526V795M966.5 526V795M998.5 526V795M1030.5 526V795M1062.5 526V795M1094.5 526V795M1126.5 526V795M1158.5 526V795M1190.5 526V795M1222.5 526V795M1254.5 526V795M1286.5 526V795M1318.5 526V795M1350.5 526V795M1382.5 526V795M1414.5 526V795M1446.5 526V795M1478.5 526V795M1510.5 526V795M1542.5 526V795M1574.5 526V795M1606.5 526V795M1638.5 526V795M1670.5 526V795M1702.5 526V795M1734.5 526V795M1766.5 526V795M1798.5 526V795M1830.5 526V795M1862.5 526V795M1894.5 526V795M1926.5 526V795M1958.5 526V795M1990.5 526V795M2022.5 526V795M2054.5 526V795M2086.5 526V795M2118.5 526V795M2150.5 526V795M2182.5 526V795M2214.5 526V795M2246.5 526V795M2278.5 526V795M2310.5 526V795M2342.5 526V795M2374.5 526V795M2406.5 526V795M2438.5 526V795M2470.5 526V795M2502.5 526V795M294.5 798V1067M326.5 798V1067M358.5 798V1067M390.5 798V1067M422.5 798V1067M454.5 798V1067M486.5 798V1067M518.5 798V1067M550.5 798V1067M582.5 798V1067M614.5 798V1067M646.5 798V1067M678.5 798V1067M710.5 798V1067M742.5 798V1067M774.5 798V1067M806.5 798V1067M838.5 798V1067M870.5 798V1067M902.5 798V1067M934.5 798V1067M966.5 798V1067M998.5 798V1067M1030.5 798V1067M1062.5 798V1067M1094.5 798V1067M1126.5 798V1067M1158.5 798V1067M1190.5 798V1067M1222.5 798V1067M1254.5 798V1067M1286.5 798V1067M1318.5 798V1067M1350.5 798V1067M1382.5 798V1067M1414.5 798V1067M1446.5 798V1067M1478.5 798V1067M1510.5 798V1067M1542.5 798V1067M1574.5 798V1067M1606.5 798V1067M1638.5 798V1067M1670.5 798V1067M1702.5 798V1067M1734.5 798V1067M1766.5 798V1067M1798.5 798V1067M1830.5 798V1067M1862.5 798V1067M1894.5 798V1067M1926.5 798V1067M1958.5 798V1067M1990.5 798V1067M2022.5 798V1067M2054.5 798V1067M2086.5 798V1067M2118.5 798V1067M2150.5 798V1067M2182.5 798V1067M2214.5 798V1067M2246.5 798V1067M2278.5 798V1067M2310.5 798V1067M2342.5 798V1067M2374.5 798V1067M2406.5 798V1067M2438.5 798V1067M2470.5 798V1067M2502.5 798V1067M294.5 1070V1339M326.5 1070V1339M358.5 1070V1339M390.5 1070V1339M422.5 1070V1339M454.5 1070V1339M486.5 1070V1339M518.5 1070V1339M550.5 1070V1339M582.5 1070V1339M614.5 1070V1339M646.5 1070V1339M678.5 1070V1339M710.5 1070V1339M742.5 1070V1339M774.5 1070V1339M806.5 1070V1339M838.5 1070V1339M870.5 1070V1339M902.5 1070V1339M934.5 1070V1339M966.5 1070V1339M998.5 1070V1339M1030.5 1070V1339M1062.5 1070V1339M1094.5 1070V1339M1126.5 1070V1339M1158.5 1070V1339M1190.5 1070V1339M1222.5 1070V1339M1254.5 1070V1339M1286.5 1070V1339M1318.5 1070V1339M1350.5 1070V1339M1382.5 1070V1339M1414.5 1070V1339M1446.5 1070V1339M1478.5 1070V1339M1510.5 1070V1339M1542.5 1070V1339M1574.5 1070V1339M1606.5 1070V1339M1638.5 1070V1339M1670.5 1070V1339M1702.5 1070V1339M1734.5 1070V1339M1766.5 1070V1339M1798.5 1070V1339M1830.5 1070V1339M1862.5 1070V1339M1894.5 1070V1339M1926.5 1070V1339M1958.5 1070V1339M1990.5 1070V1339M2022.5 1070V1339M2054.5 1070V1339M2086.5 1070V1339M2118.5 1070V1339M2150.5 1070V1339M2182.5 1070V1339M2214.5 1070V1339M2246.5 1070V1339M2278.5 1070V1339M2310.5 1070V1339M2342.5 1070V1339M2374.5 1070V1339M2406.5 1070V1339M2438.5 1070V1339M2470.5 1070V1339M2502.5 1070V1339M294 100.5H2518M294 135.5H2518M294 169.5H2518M294 204.5H2518M294 238.5H2518M294 273.5H2518M294 307.5H2518M294 342.5H2518M294 376.5H2518M294 411.5H2518M294 445.5H2518M294 480.5H2518M294 514.5H2518" stroke="#474747" stroke-width="1" stroke-dasharray="3 3" fill="none" shape-rendering="crispEdges"/>
<path d="M294 660.5H2518M294 947.5H2518M294 1219.5H2518" stroke="#d0d0d0" stroke-width="1" stroke-dasharray="3 3" fill="none" shape-rendering="crispEdges"/>
<defs><clipPath id="cm"><rect x="294" y="74" width="2224" height="449"/></clipPath><clipPath id="cw"><rect x="294" y="527" width="2224" height="812"/></clipPath></defs>
<g clip-path="url(#cm)">
<path d="M294 288.5H2518" stroke="#ff0000" stroke-width="1" shape-rendering="crispEdges"/>
<path d="M294 292.5H2518" stroke="#505050" stroke-width="1" shape-rendering="crispEdges"/>
<rect x="290" y="199.9" width="9" height="4" rx="1" fill="#ff0000"/><circle cx="297" cy="201.9" r="1" fill="#000" opacity=".7"/>
<rect x="322" y="199.9" width="9" height="4" rx="1" fill="#ff0000"/><circle cx="329" cy="201.9" r="1" fill="#000" opacity=".7"/>
<rect x="354" y="199.9" width="9" height="4" rx="1" fill="#ff0000"/><circle cx="361" cy="201.9" r="1" fill="#000" opacity=".7"/>
<rect x="386" y="201.9" width="9" height="4" rx="1" fill="#ff0000"/><circle cx="393" cy="203.9" r="1" fill="#000" opacity=".7"/>
<rect x="418" y="201.9" width="9" height="4" rx="1" fill="#ff0000"/><circle cx="425" cy="203.9" r="1" fill="#000" opacity=".7"/>
<rect x="450" y="201.9" width="9" height="4" rx="1" fill="#ff0000"/><circle cx="457" cy="203.9" r="1" fill="#000" opacity=".7"/>
<rect x="482" y="201.9" width="9" height="4" rx="1" fill="#ff0000"/><circle cx="489" cy="203.9" r="1" fill="#000" opacity=".7"/>
<rect x="514" y="201.9" width="9" height="4" rx="1" fill="#ff0000"/><circle cx="521" cy="203.9" r="1" fill="#000" opacity=".7"/>
<rect x="546" y="269.7" width="9" height="4" rx="1" fill="#ff0000"/><circle cx="553" cy="271.7" r="1" fill="#000" opacity=".7"/>
<rect x="578" y="269.7" width="9" height="4" rx="1" fill="#ff0000"/><circle cx="585" cy="271.7" r="1" fill="#000" opacity=".7"/>
<rect x="610" y="269.7" width="9" height="4" rx="1" fill="#ff0000"/><circle cx="617" cy="271.7" r="1" fill="#000" opacity=".7"/>
<rect x="642" y="269.7" width="9" height="4" rx="1" fill="#ff0000"/><circle cx="649" cy="271.7" r="1" fill="#000" opacity=".7"/>
<rect x="674" y="269.7" width="9" height="4" rx="1" fill="#ff0000"/><circle cx="681" cy="271.7" r="1" fill="#000" opacity=".7"/>
<rect x="706" y="269.7" width="9" height="4" rx="1" fill="#ff0000"/><circle cx="713" cy="271.7" r="1" fill="#000" opacity=".7"/>
<rect x="738" y="269.7" width="9" height="4" rx="1" fill="#ff0000"/><circle cx="745" cy="271.7" r="1" fill="#000" opacity=".7"/>
<rect x="770" y="269.7" width="9" height="4" rx="1" fill="#ff0000"/><circle cx="777" cy="271.7" r="1" fill="#000" opacity=".7"/>
<rect x="802" y="269.7" width="9" height="4" rx="1" fill="#ff0000"/><circle cx="809" cy="271.7" r="1" fill="#000" opacity=".7"/>
<rect x="834" y="269.7" width="9" height="4" rx="1" fill="#ff0000"/><circle cx="841" cy="271.7" r="1" fill="#000" opacity=".7"/>
<rect x="866" y="269.7" width="9" height="4" rx="1" fill="#ff0000"/><circle cx="873" cy="271.7" r="1" fill="#000" opacity=".7"/>
<rect x="898" y="269.7" width="9" height="4" rx="1" fill="#ff0000"/><circle cx="905" cy="271.7" r="1" fill="#000" opacity=".7"/>
<rect x="930" y="269.7" width="9" height="4" rx="1" fill="#ff0000"/><circle cx="937" cy="271.7" r="1" fill="#000" opacity=".7"/>
<rect x="962" y="269.7" width="9" height="4" rx="1" fill="#ff0000"/><circle cx="969" cy="271.7" r="1" fill="#000" opacity=".7"/>
<rect x="994" y="315.9" width="9" height="4" rx="1" fill="#ff0000"/><circle cx="1001" cy="317.9" r="1" fill="#000" opacity=".7"/>
<rect x="1026" y="315.9" width="9" height="4" rx="1" fill="#ff0000"/><circle cx="1033" cy="317.9" r="1" fill="#000" opacity=".7"/>
<rect x="1058" y="315.9" width="9" height="4" rx="1" fill="#ff0000"/><circle cx="1065" cy="317.9" r="1" fill="#000" opacity=".7"/>
<rect x="1090" y="315.9" width="9" height="4" rx="1" fill="#ff0000"/><circle cx="1097" cy="317.9" r="1" fill="#000" opacity=".7"/>
<rect x="1122" y="315.9" width="9" height="4" rx="1" fill="#ff0000"/><circle cx="1129" cy="317.9" r="1" fill="#000" opacity=".7"/>
<rect x="1154" y="315.9" width="9" height="4" rx="1" fill="#ff0000"/><circle cx="1161" cy="317.9" r="1" fill="#000" opacity=".7"/>
<rect x="1186" y="315.9" width="9" height="4" rx="1" fill="#ff0000"/><circle cx="1193" cy="317.9" r="1" fill="#000" opacity=".7"/>
<rect x="1218" y="315.9" width="9" height="4" rx="1" fill="#ff0000"/><circle cx="1225" cy="317.9" r="1" fill="#000" opacity=".7"/>
<rect x="1250" y="315.9" width="9" height="4" rx="1" fill="#ff0000"/><circle cx="1257" cy="317.9" r="1" fill="#000" opacity=".7"/>
<rect x="1282" y="315.9" width="9" height="4" rx="1" fill="#ff0000"/><circle cx="1289" cy="317.9" r="1" fill="#000" opacity=".7"/>
<rect x="1314" y="315.9" width="9" height="4" rx="1" fill="#ff0000"/><circle cx="1321" cy="317.9" r="1" fill="#000" opacity=".7"/>
<rect x="1346" y="315.9" width="9" height="4" rx="1" fill="#ff0000"/><circle cx="1353" cy="317.9" r="1" fill="#000" opacity=".7"/>
<rect x="1378" y="315.9" width="9" height="4" rx="1" fill="#ff0000"/><circle cx="1385" cy="317.9" r="1" fill="#000" opacity=".7"/>
<rect x="1410" y="315.9" width="9" height="4" rx="1" fill="#ff0000"/><circle cx="1417" cy="317.9" r="1" fill="#000" opacity=".7"/>
<rect x="1442" y="315.9" width="9" height="4" rx="1" fill="#ff0000"/><circle cx="1449" cy="317.9" r="1" fill="#000" opacity=".7"/>
<rect x="1474" y="315.9" width="9" height="4" rx="1" fill="#ff0000"/><circle cx="1481" cy="317.9" r="1" fill="#000" opacity=".7"/>
<rect x="1506" y="315.9" width="9" height="4" rx="1" fill="#ff0000"/><circle cx="1513" cy="317.9" r="1" fill="#000" opacity=".7"/>
<rect x="1538" y="315.9" width="9" height="4" rx="1" fill="#ff0000"/><circle cx="1545" cy="317.9" r="1" fill="#000" opacity=".7"/>
<rect x="1570" y="315.9" width="9" height="4" rx="1" fill="#ff0000"/><circle cx="1577" cy="317.9" r="1" fill="#000" opacity=".7"/>
<rect x="1602" y="315.9" width="9" height="4" rx="1" fill="#ff0000"/><circle cx="1609" cy="317.9" r="1" fill="#000" opacity=".7"/>
<rect x="1634" y="315.9" width="9" height="4" rx="1" fill="#ff0000"/><circle cx="1641" cy="317.9" r="1" fill="#000" opacity=".7"/>
<rect x="1666" y="315.9" width="9" height="4" rx="1" fill="#ff0000"/><circle cx="1673" cy="317.9" r="1" fill="#000" opacity=".7"/>
<rect x="1698" y="315.9" width="9" height="4" rx="1" fill="#ff0000"/><circle cx="1705" cy="317.9" r="1" fill="#000" opacity=".7"/>
<rect x="1730" y="181.1" width="9" height="4" rx="1" fill="#ff0000"/><circle cx="1737" cy="183.1" r="1" fill="#000" opacity=".7"/>
<rect x="1762" y="181.1" width="9" height="4" rx="1" fill="#ff0000"/><circle cx="1769" cy="183.1" r="1" fill="#000" opacity=".7"/>
<rect x="1794" y="181.1" width="9" height="4" rx="1" fill="#ff0000"/><circle cx="1801" cy="183.1" r="1" fill="#000" opacity=".7"/>
<rect x="1826" y="181.1" width="9" height="4" rx="1" fill="#ff0000"/><circle cx="1833" cy="183.1" r="1" fill="#000" opacity=".7"/>
<rect x="1858" y="181.1" width="9" height="4" rx="1" fill="#ff0000"/><circle cx="1865" cy="183.1" r="1" fill="#000" opacity=".7"/>
<rect x="1890" y="181.1" width="9" height="4" rx="1" fill="#ff0000"/><circle cx="1897" cy="183.1" r="1" fill="#000" opacity=".7"/>
<rect x="1922" y="181.1" width="9" height="4" rx="1" fill="#ff0000"/><circle cx="1929" cy="183.1" r="1" fill="#000" opacity=".7"/>
<rect x="1954" y="181.1" width="9" height="4" rx="1" fill="#ff0000"/><circle cx="1961" cy="183.1" r="1" fill="#000" opacity=".7"/>
<rect x="1986" y="181.1" width="9" height="4" rx="1" fill="#ff0000"/><circle cx="1993" cy="183.1" r="1" fill="#000" opacity=".7"/>
<rect x="2018" y="181.1" width="9" height="4" rx="1" fill="#ff0000"/><circle cx="2025" cy="183.1" r="1" fill="#000" opacity=".7"/>
<rect x="2050" y="181.1" width="9" height="4" rx="1" fill="#ff0000"/><circle cx="2057" cy="183.1" r="1" fill="#000" opacity=".7"/>
<rect x="2082" y="181.1" width="9" height="4" rx="1" fill="#ff0000"/><circle cx="2089" cy="183.1" r="1" fill="#000" opacity=".7"/>
<rect x="2114" y="181.1" width="9" height="4" rx="1" fill="#ff0000"/><circle cx="2121" cy="183.1" r="1" fill="#000" opacity=".7"/>
<rect x="2146" y="181.1" width="9" height="4" rx="1" fill="#ff0000"/><circle cx="2153" cy="183.1" r="1" fill="#000" opacity=".7"/>
<rect x="2178" y="181.1" width="9" height="4" rx="1" fill="#ff0000"/><circle cx="2185" cy="183.1" r="1" fill="#000" opacity=".7"/>
<rect x="2210" y="181.1" width="9" height="4" rx="1" fill="#ff0000"/><circle cx="2217" cy="183.1" r="1" fill="#000" opacity=".7"/>
<rect x="2242" y="181.1" width="9" height="4" rx="1" fill="#ff0000"/><circle cx="2249" cy="183.1" r="1" fill="#000" opacity=".7"/>
<rect x="2274" y="181.1" width="9" height="4" rx="1" fill="#ff0000"/><circle cx="2281" cy="183.1" r="1" fill="#000" opacity=".7"/>
<rect x="2306" y="181.1" width="9" height="4" rx="1" fill="#ff0000"/><circle cx="2313" cy="183.1" r="1" fill="#000" opacity=".7"/>
<rect x="2338" y="181.1" width="9" height="4" rx="1" fill="#ff0000"/><circle cx="2345" cy="183.1" r="1" fill="#000" opacity=".7"/>
<rect x="2370" y="181.1" width="9" height="4" rx="1" fill="#ff0000"/><circle cx="2377" cy="183.1" r="1" fill="#000" opacity=".7"/>
<rect x="2402" y="181.1" width="9" height="4" rx="1" fill="#ff0000"/><circle cx="2409" cy="183.1" r="1" fill="#000" opacity=".7"/>
<rect x="2434" y="181.1" width="9" height="4" rx="1" fill="#ff0000"/><circle cx="2441" cy="183.1" r="1" fill="#000" opacity=".7"/>
<rect x="2466" y="181.1" width="9" height="4" rx="1" fill="#ff0000"/><circle cx="2473" cy="183.1" r="1" fill="#000" opacity=".7"/>
<rect x="2498" y="181.1" width="9" height="4" rx="1" fill="#ff0000"/><circle cx="2505" cy="183.1" r="1" fill="#000" opacity=".7"/>
<rect x="290" y="238.6" width="9" height="4" rx="1" fill="#00ffff"/><circle cx="297" cy="240.6" r="1" fill="#000" opacity=".7"/>
<rect x="322" y="238.6" width="9" height="4" rx="1" fill="#00ffff"/><circle cx="329" cy="240.6" r="1" fill="#000" opacity=".7"/>
<rect x="354" y="238.6" width="9" height="4" rx="1" fill="#00ffff"/><circle cx="361" cy="240.6" r="1" fill="#000" opacity=".7"/>
<rect x="386" y="225.1" width="9" height="4" rx="1" fill="#00ffff"/><circle cx="393" cy="227.1" r="1" fill="#000" opacity=".7"/>
<rect x="418" y="225.1" width="9" height="4" rx="1" fill="#00ffff"/><circle cx="425" cy="227.1" r="1" fill="#000" opacity=".7"/>
<rect x="450" y="225.1" width="9" height="4" rx="1" fill="#00ffff"/><circle cx="457" cy="227.1" r="1" fill="#000" opacity=".7"/>
<rect x="482" y="225.1" width="9" height="4" rx="1" fill="#00ffff"/><circle cx="489" cy="227.1" r="1" fill="#000" opacity=".7"/>
<rect x="514" y="225.1" width="9" height="4" rx="1" fill="#00ffff"/><circle cx="521" cy="227.1" r="1" fill="#000" opacity=".7"/>
<rect x="546" y="327.2" width="9" height="4" rx="1" fill="#00ffff"/><circle cx="553" cy="329.2" r="1" fill="#000" opacity=".7"/>
<rect x="578" y="327.2" width="9" height="4" rx="1" fill="#00ffff"/><circle cx="585" cy="329.2" r="1" fill="#000" opacity=".7"/>
<rect x="610" y="327.2" width="9" height="4" rx="1" fill="#00ffff"/><circle cx="617" cy="329.2" r="1" fill="#000" opacity=".7"/>
<rect x="642" y="327.2" width="9" height="4" rx="1" fill="#00ffff"/><circle cx="649" cy="329.2" r="1" fill="#000" opacity=".7"/>
<rect x="674" y="327.2" width="9" height="4" rx="1" fill="#00ffff"/><circle cx="681" cy="329.2" r="1" fill="#000" opacity=".7"/>
<rect x="706" y="327.2" width="9" height="4" rx="1" fill="#00ffff"/><circle cx="713" cy="329.2" r="1" fill="#000" opacity=".7"/>
<rect x="738" y="327.2" width="9" height="4" rx="1" fill="#00ffff"/><circle cx="745" cy="329.2" r="1" fill="#000" opacity=".7"/>
<rect x="770" y="327.2" width="9" height="4" rx="1" fill="#00ffff"/><circle cx="777" cy="329.2" r="1" fill="#000" opacity=".7"/>
<rect x="802" y="327.2" width="9" height="4" rx="1" fill="#00ffff"/><circle cx="809" cy="329.2" r="1" fill="#000" opacity=".7"/>
<rect x="834" y="327.2" width="9" height="4" rx="1" fill="#00ffff"/><circle cx="841" cy="329.2" r="1" fill="#000" opacity=".7"/>
<rect x="866" y="327.2" width="9" height="4" rx="1" fill="#00ffff"/><circle cx="873" cy="329.2" r="1" fill="#000" opacity=".7"/>
<rect x="898" y="327.2" width="9" height="4" rx="1" fill="#00ffff"/><circle cx="905" cy="329.2" r="1" fill="#000" opacity=".7"/>
<rect x="930" y="327.2" width="9" height="4" rx="1" fill="#00ffff"/><circle cx="937" cy="329.2" r="1" fill="#000" opacity=".7"/>
<rect x="962" y="327.2" width="9" height="4" rx="1" fill="#00ffff"/><circle cx="969" cy="329.2" r="1" fill="#000" opacity=".7"/>
<rect x="994" y="334.9" width="9" height="4" rx="1" fill="#00ffff"/><circle cx="1001" cy="336.9" r="1" fill="#000" opacity=".7"/>
<rect x="1026" y="334.9" width="9" height="4" rx="1" fill="#00ffff"/><circle cx="1033" cy="336.9" r="1" fill="#000" opacity=".7"/>
<rect x="1058" y="334.9" width="9" height="4" rx="1" fill="#00ffff"/><circle cx="1065" cy="336.9" r="1" fill="#000" opacity=".7"/>
<rect x="1090" y="334.9" width="9" height="4" rx="1" fill="#00ffff"/><circle cx="1097" cy="336.9" r="1" fill="#000" opacity=".7"/>
<rect x="1122" y="334.9" width="9" height="4" rx="1" fill="#00ffff"/><circle cx="1129" cy="336.9" r="1" fill="#000" opacity=".7"/>
<rect x="1154" y="334.9" width="9" height="4" rx="1" fill="#00ffff"/><circle cx="1161" cy="336.9" r="1" fill="#000" opacity=".7"/>
<rect x="1186" y="334.9" width="9" height="4" rx="1" fill="#00ffff"/><circle cx="1193" cy="336.9" r="1" fill="#000" opacity=".7"/>
<rect x="1218" y="334.9" width="9" height="4" rx="1" fill="#00ffff"/><circle cx="1225" cy="336.9" r="1" fill="#000" opacity=".7"/>
<rect x="1250" y="334.9" width="9" height="4" rx="1" fill="#00ffff"/><circle cx="1257" cy="336.9" r="1" fill="#000" opacity=".7"/>
<rect x="1282" y="334.9" width="9" height="4" rx="1" fill="#00ffff"/><circle cx="1289" cy="336.9" r="1" fill="#000" opacity=".7"/>
<rect x="1314" y="334.9" width="9" height="4" rx="1" fill="#00ffff"/><circle cx="1321" cy="336.9" r="1" fill="#000" opacity=".7"/>
<rect x="1346" y="334.9" width="9" height="4" rx="1" fill="#00ffff"/><circle cx="1353" cy="336.9" r="1" fill="#000" opacity=".7"/>
<rect x="1378" y="334.9" width="9" height="4" rx="1" fill="#00ffff"/><circle cx="1385" cy="336.9" r="1" fill="#000" opacity=".7"/>
<rect x="1410" y="334.9" width="9" height="4" rx="1" fill="#00ffff"/><circle cx="1417" cy="336.9" r="1" fill="#000" opacity=".7"/>
<rect x="1442" y="334.9" width="9" height="4" rx="1" fill="#00ffff"/><circle cx="1449" cy="336.9" r="1" fill="#000" opacity=".7"/>
<rect x="1474" y="334.9" width="9" height="4" rx="1" fill="#00ffff"/><circle cx="1481" cy="336.9" r="1" fill="#000" opacity=".7"/>
<rect x="1506" y="334.9" width="9" height="4" rx="1" fill="#00ffff"/><circle cx="1513" cy="336.9" r="1" fill="#000" opacity=".7"/>
<rect x="1538" y="334.9" width="9" height="4" rx="1" fill="#00ffff"/><circle cx="1545" cy="336.9" r="1" fill="#000" opacity=".7"/>
<rect x="1570" y="334.9" width="9" height="4" rx="1" fill="#00ffff"/><circle cx="1577" cy="336.9" r="1" fill="#000" opacity=".7"/>
<rect x="1602" y="334.9" width="9" height="4" rx="1" fill="#00ffff"/><circle cx="1609" cy="336.9" r="1" fill="#000" opacity=".7"/>
<rect x="1634" y="334.9" width="9" height="4" rx="1" fill="#00ffff"/><circle cx="1641" cy="336.9" r="1" fill="#000" opacity=".7"/>
<rect x="1666" y="334.9" width="9" height="4" rx="1" fill="#00ffff"/><circle cx="1673" cy="336.9" r="1" fill="#000" opacity=".7"/>
<rect x="1698" y="334.9" width="9" height="4" rx="1" fill="#00ffff"/><circle cx="1705" cy="336.9" r="1" fill="#000" opacity=".7"/>
<rect x="1730" y="210.2" width="9" height="4" rx="1" fill="#00ffff"/><circle cx="1737" cy="212.2" r="1" fill="#000" opacity=".7"/>
<rect x="1762" y="210.2" width="9" height="4" rx="1" fill="#00ffff"/><circle cx="1769" cy="212.2" r="1" fill="#000" opacity=".7"/>
<rect x="1794" y="210.2" width="9" height="4" rx="1" fill="#00ffff"/><circle cx="1801" cy="212.2" r="1" fill="#000" opacity=".7"/>
<rect x="1826" y="210.2" width="9" height="4" rx="1" fill="#00ffff"/><circle cx="1833" cy="212.2" r="1" fill="#000" opacity=".7"/>
<rect x="1858" y="210.2" width="9" height="4" rx="1" fill="#00ffff"/><circle cx="1865" cy="212.2" r="1" fill="#000" opacity=".7"/>
<rect x="1890" y="210.2" width="9" height="4" rx="1" fill="#00ffff"/><circle cx="1897" cy="212.2" r="1" fill="#000" opacity=".7"/>
<rect x="1922" y="210.2" width="9" height="4" rx="1" fill="#00ffff"/><circle cx="1929" cy="212.2" r="1" fill="#000" opacity=".7"/>
<rect x="1954" y="210.2" width="9" height="4" rx="1" fill="#00ffff"/><circle cx="1961" cy="212.2" r="1" fill="#000" opacity=".7"/>
<rect x="1986" y="210.2" width="9" height="4" rx="1" fill="#00ffff"/><circle cx="1993" cy="212.2" r="1" fill="#000" opacity=".7"/>
<rect x="2018" y="210.2" width="9" height="4" rx="1" fill="#00ffff"/><circle cx="2025" cy="212.2" r="1" fill="#000" opacity=".7"/>
<rect x="2050" y="210.2" width="9" height="4" rx="1" fill="#00ffff"/><circle cx="2057" cy="212.2" r="1" fill="#000" opacity=".7"/>
<rect x="2082" y="210.2" width="9" height="4" rx="1" fill="#00ffff"/><circle cx="2089" cy="212.2" r="1" fill="#000" opacity=".7"/>
<rect x="2114" y="210.2" width="9" height="4" rx="1" fill="#00ffff"/><circle cx="2121" cy="212.2" r="1" fill="#000" opacity=".7"/>
<rect x="2146" y="210.2" width="9" height="4" rx="1" fill="#00ffff"/><circle cx="2153" cy="212.2" r="1" fill="#000" opacity=".7"/>
<rect x="2178" y="210.2" width="9" height="4" rx="1" fill="#00ffff"/><circle cx="2185" cy="212.2" r="1" fill="#000" opacity=".7"/>
<rect x="2210" y="210.2" width="9" height="4" rx="1" fill="#00ffff"/><circle cx="2217" cy="212.2" r="1" fill="#000" opacity=".7"/>
<rect x="2242" y="210.2" width="9" height="4" rx="1" fill="#00ffff"/><circle cx="2249" cy="212.2" r="1" fill="#000" opacity=".7"/>
<rect x="2274" y="210.2" width="9" height="4" rx="1" fill="#00ffff"/><circle cx="2281" cy="212.2" r="1" fill="#000" opacity=".7"/>
<rect x="2306" y="210.2" width="9" height="4" rx="1" fill="#00ffff"/><circle cx="2313" cy="212.2" r="1" fill="#000" opacity=".7"/>
<rect x="2338" y="210.2" width="9" height="4" rx="1" fill="#00ffff"/><circle cx="2345" cy="212.2" r="1" fill="#000" opacity=".7"/>
<rect x="2370" y="210.2" width="9" height="4" rx="1" fill="#00ffff"/><circle cx="2377" cy="212.2" r="1" fill="#000" opacity=".7"/>
<rect x="2402" y="210.2" width="9" height="4" rx="1" fill="#00ffff"/><circle cx="2409" cy="212.2" r="1" fill="#000" opacity=".7"/>
<rect x="2434" y="210.2" width="9" height="4" rx="1" fill="#00ffff"/><circle cx="2441" cy="212.2" r="1" fill="#000" opacity=".7"/>
<rect x="2466" y="210.2" width="9" height="4" rx="1" fill="#00ffff"/><circle cx="2473" cy="212.2" r="1" fill="#000" opacity=".7"/>
<rect x="2498" y="210.2" width="9" height="4" rx="1" fill="#00ffff"/><circle cx="2505" cy="212.2" r="1" fill="#000" opacity=".7"/>
<rect x="290" y="279.8" width="9" height="4" rx="1" fill="#00ff00"/><circle cx="297" cy="281.8" r="1" fill="#000" opacity=".7"/>
<rect x="322" y="279.8" width="9" height="4" rx="1" fill="#00ff00"/><circle cx="329" cy="281.8" r="1" fill="#000" opacity=".7"/>
<rect x="354" y="279.8" width="9" height="4" rx="1" fill="#00ff00"/><circle cx="361" cy="281.8" r="1" fill="#000" opacity=".7"/>
<rect x="386" y="258.3" width="9" height="4" rx="1" fill="#00ff00"/><circle cx="393" cy="260.3" r="1" fill="#000" opacity=".7"/>
<rect x="418" y="258.3" width="9" height="4" rx="1" fill="#00ff00"/><circle cx="425" cy="260.3" r="1" fill="#000" opacity=".7"/>
<rect x="450" y="258.3" width="9" height="4" rx="1" fill="#00ff00"/><circle cx="457" cy="260.3" r="1" fill="#000" opacity=".7"/>
<rect x="482" y="258.3" width="9" height="4" rx="1" fill="#00ff00"/><circle cx="489" cy="260.3" r="1" fill="#000" opacity=".7"/>
<rect x="514" y="258.3" width="9" height="4" rx="1" fill="#00ff00"/><circle cx="521" cy="260.3" r="1" fill="#000" opacity=".7"/>
<rect x="546" y="363.8" width="9" height="4" rx="1" fill="#00ff00"/><circle cx="553" cy="365.8" r="1" fill="#000" opacity=".7"/>
<rect x="578" y="363.8" width="9" height="4" rx="1" fill="#00ff00"/><circle cx="585" cy="365.8" r="1" fill="#000" opacity=".7"/>
<rect x="610" y="363.8" width="9" height="4" rx="1" fill="#00ff00"/><circle cx="617" cy="365.8" r="1" fill="#000" opacity=".7"/>
<rect x="642" y="363.8" width="9" height="4" rx="1" fill="#00ff00"/><circle cx="649" cy="365.8" r="1" fill="#000" opacity=".7"/>
<rect x="674" y="363.8" width="9" height="4" rx="1" fill="#00ff00"/><circle cx="681" cy="365.8" r="1" fill="#000" opacity=".7"/>
<rect x="706" y="363.8" width="9" height="4" rx="1" fill="#00ff00"/><circle cx="713" cy="365.8" r="1" fill="#000" opacity=".7"/>
<rect x="738" y="363.8" width="9" height="4" rx="1" fill="#00ff00"/><circle cx="745" cy="365.8" r="1" fill="#000" opacity=".7"/>
<rect x="770" y="363.8" width="9" height="4" rx="1" fill="#00ff00"/><circle cx="777" cy="365.8" r="1" fill="#000" opacity=".7"/>
<rect x="802" y="363.8" width="9" height="4" rx="1" fill="#00ff00"/><circle cx="809" cy="365.8" r="1" fill="#000" opacity=".7"/>
<rect x="834" y="363.8" width="9" height="4" rx="1" fill="#00ff00"/><circle cx="841" cy="365.8" r="1" fill="#000" opacity=".7"/>
<rect x="866" y="363.8" width="9" height="4" rx="1" fill="#00ff00"/><circle cx="873" cy="365.8" r="1" fill="#000" opacity=".7"/>
<rect x="898" y="363.8" width="9" height="4" rx="1" fill="#00ff00"/><circle cx="905" cy="365.8" r="1" fill="#000" opacity=".7"/>
<rect x="930" y="363.8" width="9" height="4" rx="1" fill="#00ff00"/><circle cx="937" cy="365.8" r="1" fill="#000" opacity=".7"/>
<rect x="962" y="363.8" width="9" height="4" rx="1" fill="#00ff00"/><circle cx="969" cy="365.8" r="1" fill="#000" opacity=".7"/>
<rect x="994" y="433.2" width="9" height="4" rx="1" fill="#00ff00"/><circle cx="1001" cy="435.2" r="1" fill="#000" opacity=".7"/>
<rect x="1026" y="433.2" width="9" height="4" rx="1" fill="#00ff00"/><circle cx="1033" cy="435.2" r="1" fill="#000" opacity=".7"/>
<rect x="1058" y="433.2" width="9" height="4" rx="1" fill="#00ff00"/><circle cx="1065" cy="435.2" r="1" fill="#000" opacity=".7"/>
<rect x="1090" y="433.2" width="9" height="4" rx="1" fill="#00ff00"/><circle cx="1097" cy="435.2" r="1" fill="#000" opacity=".7"/>
<rect x="1122" y="433.2" width="9" height="4" rx="1" fill="#00ff00"/><circle cx="1129" cy="435.2" r="1" fill="#000" opacity=".7"/>
<rect x="1154" y="433.2" width="9" height="4" rx="1" fill="#00ff00"/><circle cx="1161" cy="435.2" r="1" fill="#000" opacity=".7"/>
<rect x="1186" y="433.2" width="9" height="4" rx="1" fill="#00ff00"/><circle cx="1193" cy="435.2" r="1" fill="#000" opacity=".7"/>
<rect x="1218" y="433.2" width="9" height="4" rx="1" fill="#00ff00"/><circle cx="1225" cy="435.2" r="1" fill="#000" opacity=".7"/>
<rect x="1250" y="433.2" width="9" height="4" rx="1" fill="#00ff00"/><circle cx="1257" cy="435.2" r="1" fill="#000" opacity=".7"/>
<rect x="1282" y="433.2" width="9" height="4" rx="1" fill="#00ff00"/><circle cx="1289" cy="435.2" r="1" fill="#000" opacity=".7"/>
<rect x="1314" y="433.2" width="9" height="4" rx="1" fill="#00ff00"/><circle cx="1321" cy="435.2" r="1" fill="#000" opacity=".7"/>
<rect x="1346" y="433.2" width="9" height="4" rx="1" fill="#00ff00"/><circle cx="1353" cy="435.2" r="1" fill="#000" opacity=".7"/>
<rect x="1378" y="433.2" width="9" height="4" rx="1" fill="#00ff00"/><circle cx="1385" cy="435.2" r="1" fill="#000" opacity=".7"/>
<rect x="1410" y="433.2" width="9" height="4" rx="1" fill="#00ff00"/><circle cx="1417" cy="435.2" r="1" fill="#000" opacity=".7"/>
<rect x="1442" y="433.2" width="9" height="4" rx="1" fill="#00ff00"/><circle cx="1449" cy="435.2" r="1" fill="#000" opacity=".7"/>
<rect x="1474" y="433.2" width="9" height="4" rx="1" fill="#00ff00"/><circle cx="1481" cy="435.2" r="1" fill="#000" opacity=".7"/>
<rect x="1506" y="433.2" width="9" height="4" rx="1" fill="#00ff00"/><circle cx="1513" cy="435.2" r="1" fill="#000" opacity=".7"/>
<rect x="1538" y="433.2" width="9" height="4" rx="1" fill="#00ff00"/><circle cx="1545" cy="435.2" r="1" fill="#000" opacity=".7"/>
<rect x="1570" y="433.2" width="9" height="4" rx="1" fill="#00ff00"/><circle cx="1577" cy="435.2" r="1" fill="#000" opacity=".7"/>
<rect x="1602" y="433.2" width="9" height="4" rx="1" fill="#00ff00"/><circle cx="1609" cy="435.2" r="1" fill="#000" opacity=".7"/>
<rect x="1634" y="433.2" width="9" height="4" rx="1" fill="#00ff00"/><circle cx="1641" cy="435.2" r="1" fill="#000" opacity=".7"/>
<rect x="1666" y="433.2" width="9" height="4" rx="1" fill="#00ff00"/><circle cx="1673" cy="435.2" r="1" fill="#000" opacity=".7"/>
<rect x="1698" y="433.2" width="9" height="4" rx="1" fill="#00ff00"/><circle cx="1705" cy="435.2" r="1" fill="#000" opacity=".7"/>
<rect x="1730" y="326.1" width="9" height="4" rx="1" fill="#00ff00"/><circle cx="1737" cy="328.1" r="1" fill="#000" opacity=".7"/>
<rect x="1762" y="326.1" width="9" height="4" rx="1" fill="#00ff00"/><circle cx="1769" cy="328.1" r="1" fill="#000" opacity=".7"/>
<rect x="1794" y="326.1" width="9" height="4" rx="1" fill="#00ff00"/><circle cx="1801" cy="328.1" r="1" fill="#000" opacity=".7"/>
<rect x="1826" y="326.1" width="9" height="4" rx="1" fill="#00ff00"/><circle cx="1833" cy="328.1" r="1" fill="#000" opacity=".7"/>
<rect x="1858" y="326.1" width="9" height="4" rx="1" fill="#00ff00"/><circle cx="1865" cy="328.1" r="1" fill="#000" opacity=".7"/>
<rect x="1890" y="326.1" width="9" height="4" rx="1" fill="#00ff00"/><circle cx="1897" cy="328.1" r="1" fill="#000" opacity=".7"/>
<rect x="1922" y="326.1" width="9" height="4" rx="1" fill="#00ff00"/><circle cx="1929" cy="328.1" r="1" fill="#000" opacity=".7"/>
<rect x="1954" y="326.1" width="9" height="4" rx="1" fill="#00ff00"/><circle cx="1961" cy="328.1" r="1" fill="#000" opacity=".7"/>
<rect x="1986" y="326.1" width="9" height="4" rx="1" fill="#00ff00"/><circle cx="1993" cy="328.1" r="1" fill="#000" opacity=".7"/>
<rect x="2018" y="326.1" width="9" height="4" rx="1" fill="#00ff00"/><circle cx="2025" cy="328.1" r="1" fill="#000" opacity=".7"/>
<rect x="2050" y="326.1" width="9" height="4" rx="1" fill="#00ff00"/><circle cx="2057" cy="328.1" r="1" fill="#000" opacity=".7"/>
<rect x="2082" y="326.1" width="9" height="4" rx="1" fill="#00ff00"/><circle cx="2089" cy="328.1" r="1" fill="#000" opacity=".7"/>
<rect x="2114" y="326.1" width="9" height="4" rx="1" fill="#00ff00"/><circle cx="2121" cy="328.1" r="1" fill="#000" opacity=".7"/>
<rect x="2146" y="326.1" width="9" height="4" rx="1" fill="#00ff00"/><circle cx="2153" cy="328.1" r="1" fill="#000" opacity=".7"/>
<rect x="2178" y="326.1" width="9" height="4" rx="1" fill="#00ff00"/><circle cx="2185" cy="328.1" r="1" fill="#000" opacity=".7"/>
<rect x="2210" y="326.1" width="9" height="4" rx="1" fill="#00ff00"/><circle cx="2217" cy="328.1" r="1" fill="#000" opacity=".7"/>
<rect x="2242" y="326.1" width="9" height="4" rx="1" fill="#00ff00"/><circle cx="2249" cy="328.1" r="1" fill="#000" opacity=".7"/>
<rect x="2274" y="326.1" width="9" height="4" rx="1" fill="#00ff00"/><circle cx="2281" cy="328.1" r="1" fill="#000" opacity=".7"/>
<rect x="2306" y="326.1" width="9" height="4" rx="1" fill="#00ff00"/><circle cx="2313" cy="328.1" r="1" fill="#000" opacity=".7"/>
<rect x="2338" y="326.1" width="9" height="4" rx="1" fill="#00ff00"/><circle cx="2345" cy="328.1" r="1" fill="#000" opacity=".7"/>
<rect x="2370" y="326.1" width="9" height="4" rx="1" fill="#00ff00"/><circle cx="2377" cy="328.1" r="1" fill="#000" opacity=".7"/>
<rect x="2402" y="326.1" width="9" height="4" rx="1" fill="#00ff00"/><circle cx="2409" cy="328.1" r="1" fill="#000" opacity=".7"/>
<rect x="2434" y="326.1" width="9" height="4" rx="1" fill="#00ff00"/><circle cx="2441" cy="328.1" r="1" fill="#000" opacity=".7"/>
<rect x="2466" y="326.1" width="9" height="4" rx="1" fill="#00ff00"/><circle cx="2473" cy="328.1" r="1" fill="#000" opacity=".7"/>
<rect x="2498" y="326.1" width="9" height="4" rx="1" fill="#00ff00"/><circle cx="2505" cy="328.1" r="1" fill="#000" opacity=".7"/>
<polyline fill="none" stroke="#008000" stroke-width="3.4" stroke-linejoin="round" points="703,73 710,95 934,95 957,73"/>
<polyline fill="none" stroke="#008000" stroke-width="3.4" stroke-linejoin="round" points="769,73 774,92 966,94 970,73"/>
<polyline fill="none" stroke="#008000" stroke-width="3.4" stroke-linejoin="round" points="1128,73 1158,242.6 1318,242.6 1350,261.4 1702,261.4 1713,73"/>
<polyline fill="none" stroke="#008000" stroke-width="3.4" stroke-linejoin="round" points="1139,73 1158,288.8 1254,288.8 1286,298.6 1542,298.6 1574,242.8 1702,242.8 1713,73"/>
<polyline fill="none" stroke="#008000" stroke-width="3.4" stroke-linejoin="round" points="293,399 358,399 390,400.8 550,400.8 567,522"/>
<polyline fill="none" stroke="#008000" stroke-width="3.4" stroke-linejoin="round" points="293,403.9 358,403.9 390,400.8 518,400.8 535,522"/>
<polyline fill="none" stroke="#008000" stroke-width="3.4" stroke-linejoin="round" points="1921,522 1926,456.4 2086,456.4 2118,433 2278,433 2310,461.4 2470,461.4 2493,522"/>
<polyline fill="none" stroke="#008000" stroke-width="3.4" stroke-linejoin="round" points="1952,522 1958,451.6 2406,451.6 2418,522"/>
<polyline fill="none" stroke="#0000ff" stroke-width="3.4" stroke-linejoin="round" points="293,161.4 358,161.4 390,139.6"/>
<polyline fill="none" stroke="#0000ff" stroke-width="3.4" stroke-linejoin="round" points="293,176.5 358,176.5 390,139.6"/>
<polyline fill="none" stroke="#0000ff" stroke-width="3.4" stroke-linejoin="round" points="474,137.6 550,137.6 582,154.2 742,154.2 774,206.7 966,206.7 998,178.3 1126,178.3 1158,345.6 1318,345.6 1350,351.6 1510,351.6 1542,346.6 1702,346.6 1727,73"/>
<polyline fill="none" stroke="#0000ff" stroke-width="3.4" stroke-linejoin="round" points="518,137.6 550,161.4 678,161.4 710,206.7 934,206.7 966,242.4 1126,242.4 1158,363.2 1254,363.2 1286,377.8 1542,377.8 1574,338.9 1702,338.9 1727,73"/>
<polyline fill="none" stroke="#0000ff" stroke-width="3.4" stroke-linejoin="round" points="2097,73 2118,102.4 2278,102.4 2310,151.4 2470,151.4 2502,124.7"/>
<polyline fill="none" stroke="#0000ff" stroke-width="3.4" stroke-linejoin="round" points="293,323.6 358,323.6 390,312 550,312 582,479 742,479 774,438.9 934,438.9 950,522"/>
<polyline fill="none" stroke="#0000ff" stroke-width="3.4" stroke-linejoin="round" points="518,312 550,485.5 678,485.5 710,425.3 966,425.3 980,522"/>
<polyline fill="none" stroke="#0000ff" stroke-width="3.4" stroke-linejoin="round" points="1521,522 1542,514.6 1702,514.6 1708,522"/>
<polyline fill="none" stroke="#0000ff" stroke-width="3.4" stroke-linejoin="round" points="1234,515 1254,515 1266,522"/>
<polyline fill="none" stroke="#0000ff" stroke-width="3.4" stroke-linejoin="round" points="1900,522 1926,324.3 2086,324.3 2118,322.5 2278,322.5 2310,358.6 2470,358.6 2502,407.8"/>
<polyline fill="none" stroke="#0000ff" stroke-width="3.4" stroke-linejoin="round" points="1930,522 1958,319.2 2406,319.2 2438,444.6 2502,444.6"/>
<polyline fill="none" stroke="#ff0000" stroke-width="3.4" stroke-linejoin="round" points="293,196.9 358,196.9 390,181.6 550,181.6 582,249.8 742,249.8 774,265.4 934,264.7 966,347.8 1126,347.8 1158,395.8 1254,395.8 1286,421 1542,421 1574,390.3 1702,390.3 1734,90.8 1894,90.8 1926,139.6 2086,139.6 2118,164.1 2278,164.1 2310,206.7 2470,206.7 2502,186"/>
<polyline fill="none" stroke="#ff0000" stroke-width="3.4" stroke-linejoin="round" points="293,214.4 358,214.4 390,181.6"/>
<polyline fill="none" stroke="#ff0000" stroke-width="3.4" stroke-linejoin="round" points="518,181.6 550,262.5 678,262.5 710,254.9 966,254.9 998,323.6 1126,323.6 1158,386 1510,386 1542,396.4 1702,396.4 1734,95.2 1926,95.2 1958,128.4 2406,128.4 2438,148.3 2502,148.3"/>
<polyline fill="none" stroke="#ff0000" stroke-width="3.4" stroke-linejoin="round" points="293,277.8 358,277.8 390,269.1 550,269.1 582,410 742,410 774,381.6 934,381.6 966,522"/>
<polyline fill="none" stroke="#ff0000" stroke-width="3.4" stroke-linejoin="round" points="293,288.3 358,288.3 390,269.1"/>
<polyline fill="none" stroke="#ff0000" stroke-width="3.4" stroke-linejoin="round" points="518,269.1 550,424.2 678,424.2 710,366.3 966,366.3 990,522"/>
<polyline fill="none" stroke="#ff0000" stroke-width="3.4" stroke-linejoin="round" points="1152,522 1158,472.4 1254,472.4 1286,499.7 1510,499.7 1542,500.1 1574,485.5 1702,485.5 1734,371.7 1926,371.7 1958,261.4 2406,261.4 2438,344.6 2502,344.6"/>
<polyline fill="none" stroke="#ff0000" stroke-width="3.4" stroke-linejoin="round" points="1158,489.9 1318,489.9 1350,475.6 1510,475.6 1542,481.8 1702,481.8 1734,380.5 1894,380.5 1926,272.4 2086,272.4 2118,274.5 2278,274.5 2310,310.5 2470,310.5 2502,328"/>
<polyline fill="none" stroke="#add8e6" stroke-width="3" stroke-linejoin="round" points="293,235.8 358,235.8 390,224.4 550,224.4 582,345.6 742,345.6 774,323.8 934,321.4 966,421.2 1126,421.2 1158,448.1 1318,448.1 1350,439.4 1510,439.4 1542,431.9 1702,431.9 1734,192.5 1894,192.5 1926,214.5 2086,214.5 2118,225.3 2278,225.3 2310,254.5 2470,254.5 2502,266"/>
<polyline fill="none" stroke="#add8e6" stroke-width="3" stroke-linejoin="round" points="293,241.7 358,241.7 390,224.4"/>
<polyline fill="none" stroke="#add8e6" stroke-width="3" stroke-linejoin="round" points="293,249.8 358,249.8 390,224.4"/>
<polyline fill="none" stroke="#add8e6" stroke-width="3" stroke-linejoin="round" points="518,224.4 550,362 678,362 710,306.3 966,306.3 998,416.9 1126,416.9 1158,439.4 1254,439.4 1286,464.4 1542,464.4 1574,445 1702,445 1734,279 1894,280.8 1926,191.4 2086,191.4 2118,212.2 2278,212.2 2310,261.6 2470,261.6 2502,244"/>
<polyline fill="none" stroke="#add8e6" stroke-width="3" stroke-linejoin="round" points="550,224.4 582,316 710,316"/>
<polyline fill="none" stroke="#add8e6" stroke-width="3" stroke-linejoin="round" points="518,224.4 550,323.6 678,323.6 710,316 966,316 998,468.1 1126,468.1 1158,426.2 1318,426.2 1350,422.5 1510,423 1542,436 1574,443.9 1702,443.9 1734,276.7 1926,276.7 1958,186.2 2406,186.2 2438,243.3 2502,243.3"/>
<polyline fill="none" stroke="#add8e6" stroke-width="3" stroke-linejoin="round" points="1254,426.2 1286,457.5 1542,458.1 1574,443.9"/>
<polyline fill="none" stroke="#add8e6" stroke-width="3" stroke-linejoin="round" points="1894,192.5 1926,192.5 1958,202.4 2406,202.4 2438,247.3 2502,247.3"/>
<circle cx="358" cy="193.6" r="2.6" fill="#9400d3"/>
<circle cx="390" cy="193.6" r="2.6" fill="#9400d3"/>
<circle cx="422" cy="193.6" r="2.6" fill="#9400d3"/>
<circle cx="454" cy="193.6" r="2.6" fill="#9400d3"/>
<circle cx="486" cy="193.6" r="2.6" fill="#9400d3"/>
<circle cx="518" cy="255.5" r="2.6" fill="#9400d3"/>
<circle cx="838" cy="255.5" r="2.6" fill="#9400d3"/>
<circle cx="870" cy="255.5" r="2.6" fill="#9400d3"/>
<circle cx="902" cy="255.5" r="2.6" fill="#9400d3"/>
<circle cx="934" cy="255.5" r="2.6" fill="#9400d3"/>
<circle cx="966" cy="297.5" r="2.6" fill="#9400d3"/>
<circle cx="998" cy="297.5" r="2.6" fill="#9400d3"/>
<circle cx="1030" cy="297.5" r="2.6" fill="#9400d3"/>
<circle cx="1126" cy="297.5" r="2.6" fill="#9400d3"/>
<circle cx="1158" cy="297.5" r="2.6" fill="#9400d3"/>
<circle cx="1190" cy="297.5" r="2.6" fill="#9400d3"/>
<circle cx="1222" cy="297.5" r="2.6" fill="#9400d3"/>
<circle cx="1254" cy="297.5" r="2.6" fill="#9400d3"/>
<circle cx="1286" cy="297.5" r="2.6" fill="#9400d3"/>
<circle cx="1382" cy="297.5" r="2.6" fill="#9400d3"/>
<circle cx="1414" cy="297.5" r="2.6" fill="#9400d3"/>
<circle cx="1446" cy="297.5" r="2.6" fill="#9400d3"/>
<circle cx="1478" cy="297.5" r="2.6" fill="#9400d3"/>
<circle cx="1510" cy="297.5" r="2.6" fill="#9400d3"/>
<circle cx="1542" cy="297.5" r="2.6" fill="#9400d3"/>
<circle cx="1606" cy="449.5" r="2.6" fill="#9400d3"/>
<circle cx="1638" cy="449.5" r="2.6" fill="#9400d3"/>
<circle cx="1670" cy="449.5" r="2.6" fill="#9400d3"/>
<path d="M359 224.4V282.2" stroke="#ff0000" stroke-width="4"/>
<path d="M423 281.8V313.5" stroke="#ff0000" stroke-width="4"/>
<path d="M455 316.8V370.8" stroke="#ff0000" stroke-width="4"/>
<path d="M487 365.2V368.4" stroke="#ff0000" stroke-width="4"/>
<path d="M519 343.9V361.9" stroke="#f4a460" stroke-width="4"/>
<path d="M551 317V344.4" stroke="#808080" stroke-width="4"/>
<path d="M615 315V325.5" stroke="#808080" stroke-width="4"/>
<path d="M647 305.2V328.2" stroke="#808080" stroke-width="4"/>
<path d="M679 306.3V352.2" stroke="#808080" stroke-width="4"/>
<path d="M711 323.8V354" stroke="#808080" stroke-width="4"/>
<path d="M807 327V341.9" stroke="#808080" stroke-width="4"/>
<path d="M839 341.1V388.1" stroke="#ff0000" stroke-width="4"/>
<path d="M871 387V481.1" stroke="#ff0000" stroke-width="4"/>
<path d="M903 454.9V478.9" stroke="#ff0000" stroke-width="4"/>
<path d="M935 468V470.8" stroke="#ff0000" stroke-width="4"/>
<path d="M967 454.9V469.1" stroke="#ff0000" stroke-width="4"/>
<path d="M999 437.4V454.9" stroke="#ff0000" stroke-width="4"/>
<path d="M1031 419.9V435.2" stroke="#f4a460" stroke-width="4"/>
<path d="M1063 412.2V421" stroke="#808080" stroke-width="4"/>
<path d="M1095 412.6V427.5" stroke="#808080" stroke-width="4"/>
<path d="M1127 427.1V438" stroke="#ff0000" stroke-width="4"/>
<path d="M1191 440.6V457" stroke="#ff0000" stroke-width="4"/>
<path d="M1223 456V462.1" stroke="#ff0000" stroke-width="4"/>
<path d="M1255 438.5V463.6" stroke="#ff0000" stroke-width="4"/>
<path d="M1287 421.4V439.5" stroke="#f4a460" stroke-width="4"/>
<path d="M1319 405.2V422.7" stroke="#808080" stroke-width="4"/>
<path d="M1351 405.6V428.6" stroke="#808080" stroke-width="4"/>
<path d="M1383 428.6V446.1" stroke="#ff0000" stroke-width="4"/>
<path d="M1415 419.9V419.9" stroke="#ff0000" stroke-width="4"/>
<path d="M1447 421.4V445" stroke="#ff0000" stroke-width="4"/>
<path d="M1479 443.9V446.8" stroke="#ff0000" stroke-width="4"/>
<path d="M1543 438.5V441.7" stroke="#ff0000" stroke-width="4"/>
<path d="M1575 291V435.8" stroke="#ff00ff" stroke-width="4"/>
<path d="M1703 193V208.9" stroke="#f4a460" stroke-width="4"/>
<path d="M1767 210V218.3" stroke="#808080" stroke-width="4"/>
<path d="M1799 207.8V218.8" stroke="#808080" stroke-width="4"/>
<path d="M1831 209.6V217.9" stroke="#808080" stroke-width="4"/>
<path d="M1895 204.5V213.3" stroke="#808080" stroke-width="4"/>
<path d="M1927 203.5V214" stroke="#808080" stroke-width="4"/>
<path d="M1991 218.8V242.8" stroke="#808080" stroke-width="4"/>
<path d="M2023 228.6V239.5" stroke="#808080" stroke-width="4"/>
<path d="M2119 205V225.8" stroke="#808080" stroke-width="4"/>
<path d="M2151 205.6V284.8" stroke="#808080" stroke-width="4"/>
<path d="M2183 227.1V286.1" stroke="#808080" stroke-width="4"/>
<path d="M2215 228.6V254.9" stroke="#808080" stroke-width="4"/>
<path d="M2311 242.8V253.8" stroke="#808080" stroke-width="4"/>
<path d="M2343 219.9V242.8" stroke="#808080" stroke-width="4"/>
<path d="M2375 221.4V245" stroke="#808080" stroke-width="4"/>
<path d="M2471 246.1V263.6" stroke="#808080" stroke-width="4"/>
<path d="M2503 256V261.4" stroke="#808080" stroke-width="4"/>
<path d="M294 195.8V231.9M282 224.2H294M294 224.2H306M326 206.7V231.9M314 221H326M326 225.8H338M358 221V294.2M346 224.4H358M358 282.2H370M390 281.1V305.8M378 284.8H390M390 284H402M422 273.9V336.9M410 281.8H422M422 313.5H434M454 305.2V371.9M442 316.8H454M454 370.8H466M486 337.8V384.9M474 368.4H486M486 365.2H498M518 337.8V363M506 361.9H518M518 343.9H530M550 312.4V377.2M538 344.4H550M550 317H562M582 304.1V328.2M570 316.1H582M582 316.1H594M614 303.6V358.8M602 315H614M614 325.5H626M646 266.5V363.2M634 328.2H646M646 305.2H658M678 271.3V376.3M666 306.3H678M678 352.2H690M710 310.6V354.4M698 354H710M710 323.8H722M742 317.2V336.9M730 321.6H742M742 323.8H754M774 319.4V338M762 323.8H774M774 323.8H786M806 316.1V367.5M794 327H806M806 341.9H818M838 340.2V412.2M826 341.1H838M838 388.1H850M870 386V491M858 387H870M870 481.1H882M902 452.7V486.6M890 478.9H902M902 454.9H914M934 459.2V491M922 468H934M934 470.8H946M966 453.8V483.3M954 469.1H966M966 454.9H978M998 417.7V466.9M986 454.9H998M998 437.4H1010M1030 408.9V446.1M1018 435.2H1030M1030 419.9H1042M1062 407.8V425.3M1050 421H1062M1062 412.2H1074M1094 408.9V436.3M1082 412.6H1094M1094 427.5H1106M1126 421V461.4M1114 427.1H1126M1126 438H1138M1158 429.7V454.9M1146 438H1158M1158 438H1170M1190 416.6V482.2M1178 440.6H1190M1190 457H1202M1222 445V491M1210 456H1222M1222 462.1H1234M1254 405.6V475.6M1242 463.6H1254M1254 438.5H1266M1286 414.4V446.1M1274 439.5H1286M1286 421.4H1298M1318 398V424.2M1306 422.7H1318M1318 405.2H1330M1350 386V437.4M1338 405.6H1350M1350 428.6H1362M1382 411.1V464.7M1370 428.6H1382M1382 446.1H1394M1414 379.4V453.8M1402 419.9H1414M1414 419.9H1426M1446 398V458.1M1434 421.4H1446M1446 445H1458M1478 435.2V458.1M1466 443.9H1478M1478 446.8H1490M1510 426.4V472.4M1498 445H1510M1510 443.9H1522M1542 426.4V460.3M1530 441.7H1542M1542 438.5H1554M1574 271.3V451.6M1562 435.8H1574M1574 291H1586M1606 231.9V309.5M1594 291.4H1606M1606 238.9H1618M1638 188.1V243.9M1626 235.8H1638M1638 191H1650M1670 181.6V203.5M1658 191.4H1670M1670 191.4H1682M1702 183.8V212.2M1690 193H1702M1702 208.9H1714M1734 170.6V216.6M1722 207.8H1734M1734 211.1H1746M1766 188.1V243.9M1754 210H1766M1766 218.3H1778M1798 110.5V231.9M1786 218.8H1798M1798 207.8H1810M1830 195.8V233M1818 209.6H1830M1830 217.9H1842M1862 207.8V225.3M1850 216.6H1862M1862 218.8H1874M1894 195.8V221M1882 213.3H1894M1894 204.5H1906M1926 200.2V217.7M1914 203.5H1926M1926 214H1938M1958 149.9V224.2M1946 215.5H1958M1958 201.3H1970M1990 218.8V262.5M1978 218.8H1990M1990 242.8H2002M2022 212.2V255.5M2010 239.5H2022M2022 228.6H2034M2054 223.1V241.7M2042 225.8H2054M2054 225.8H2066M2086 218.3V239.5M2074 224.9H2086M2086 227.5H2098M2118 199.1V227.1M2106 225.8H2118M2118 205H2130M2150 205.2V303.6M2138 205.6H2150M2150 284.8H2162M2182 203.9V287M2170 286.1H2182M2182 227.1H2194M2214 224.2V262.5M2202 228.6H2214M2214 254.9H2226M2246 225.8V268M2234 254.9H2246M2246 261.4H2258M2278 235.2V264.7M2266 260.8H2278M2278 252.7H2290M2310 239.5V270.2M2298 253.8H2310M2310 242.8H2322M2342 205.2V250.5M2330 242.8H2342M2342 219.9H2354M2374 211.1V347.8M2362 221.4H2374M2374 245H2386M2406 231.5V281.1M2394 242.8H2406M2406 242.8H2418M2438 223.1V287.7M2426 249H2438M2438 247.6H2450M2470 240.2V274.5M2458 246.1H2470M2470 263.6H2482M2502 254.9V277.4M2490 261.4H2502M2502 256H2514" stroke="#00ff00" stroke-width="2" fill="none"/>
</g>
<g clip-path="url(#cw)">
<polyline fill="none" stroke="#ffff00" stroke-width="1" stroke-linejoin="round" points="294,617.4 326,633.8 358,642.5 390,656.7 422,685.2 454,723.5 486,749.7 518,766.1 550,769.4 582,759.6 614,742 646,719.1 678,703.8 710,696.1 742,689.5 774,685 806,678 838,672 870,668 902,665 934,662 966,662 998,663 1030,664 1062,665 1094,666 1126,666 1158,666 1190,665 1222,665 1254,662.2 1286,656.6 1318,643.2 1350,617.8 1382,596.2 1414,594.4 1446,615.2 1478,639.3 1510,652 1542,666 1574,674.4 1606,660.2 1638,622.8 1670,574.6 1702,545.4 1734,536.5 1766,539.8 1798,550.5 1830,565.7 1862,581 1894,591.7 1926,606.3 1958,624.9 1990,656 2022,699.3 2054,731.2 2086,746.3 2118,741.8 2150,731.2 2182,724.5 2214,711.8 2246,711.8 2278,703.3 2310,704.6 2342,695.3 2374,672.7 2406,639.5 2438,613 2470,607.1 2502,609.2"/>
<polyline fill="none" stroke="#ff0000" stroke-width="2" stroke-linejoin="round" points="294,646.9 326,640.3 358,643.6 390,683 422,724.5 454,758.5 486,767.2 518,771.6 550,766.1 582,739.9 614,714.7 646,701.6 678,691.7 710,695 742,679.7 774,670 806,660 838,655 870,650 902,648 934,650 966,655 998,660 1030,662 1062,665 1094,668 1126,668 1158,665 1190,662 1222,659 1254,653.3 1286,651.5 1318,625.4 1350,578.9 1382,584 1414,619 1446,642.4 1478,657.1 1510,659.7 1542,678.7 1574,681.3 1606,621.6 1638,569.5 1670,537.3 1702,532.7 1734,537.8 1766,550 1798,561.1 1830,578.9 1862,594.1 1894,606.3 1926,619.6 1958,647.5 1990,701.9 2022,746.3 2054,746.3 2086,744.4 2118,735.1 2150,713.4 2182,724.5 2214,697.4 2246,711.2 2278,700.1 2310,704.6 2342,682.5 2374,627.6 2406,610.3 2438,602.9 2470,607.6 2502,617.7"/>
<rect x="292" y="894.1" width="5" height="52.9" fill="#00ff00"/>
<rect x="324" y="891" width="5" height="56" fill="#00ff00"/>
<rect x="356" y="888.9" width="5" height="58.1" fill="#00ff00"/>
<rect x="388" y="901" width="5" height="46" fill="#008000"/>
<rect x="420" y="910.1" width="5" height="36.9" fill="#008000"/>
<rect x="452" y="925.3" width="5" height="21.7" fill="#008000"/>
<rect x="484" y="948" width="5" height="2.4" fill="#ff0000"/>
<rect x="516" y="948" width="5" height="20.7" fill="#ff0000"/>
<rect x="548" y="948" width="5" height="29.8" fill="#ff0000"/>
<rect x="580" y="948" width="5" height="31.5" fill="#ff0000"/>
<rect x="612" y="948" width="5" height="32.8" fill="#ff0000"/>
<rect x="644" y="948" width="5" height="35.8" fill="#ff0000"/>
<rect x="676" y="948" width="5" height="32.8" fill="#800000"/>
<rect x="708" y="948" width="5" height="39.7" fill="#ff0000"/>
<rect x="740" y="948" width="5" height="38.9" fill="#800000"/>
<rect x="772" y="948" width="5" height="38" fill="#800000"/>
<rect x="804" y="948" width="5" height="37.1" fill="#800000"/>
<rect x="836" y="948" width="5" height="39.7" fill="#ff0000"/>
<rect x="868" y="948" width="5" height="51.9" fill="#ff0000"/>
<rect x="900" y="948" width="5" height="77.9" fill="#ff0000"/>
<rect x="932" y="948" width="5" height="90" fill="#ff0000"/>
<rect x="964" y="948" width="5" height="101.8" fill="#ff0000"/>
<rect x="996" y="948" width="5" height="106.5" fill="#ff0000"/>
<rect x="1028" y="948" width="5" height="106.5" fill="#800000"/>
<rect x="1060" y="948" width="5" height="102.2" fill="#800000"/>
<rect x="1092" y="948" width="5" height="97" fill="#800000"/>
<rect x="1124" y="948" width="5" height="94.4" fill="#800000"/>
<rect x="1156" y="948" width="5" height="94.8" fill="#ff0000"/>
<rect x="1188" y="948" width="5" height="94.8" fill="#ff0000"/>
<rect x="1220" y="948" width="5" height="97.9" fill="#ff0000"/>
<rect x="1252" y="948" width="5" height="101.3" fill="#ff0000"/>
<rect x="1284" y="948" width="5" height="97" fill="#800000"/>
<rect x="1316" y="948" width="5" height="90" fill="#800000"/>
<rect x="1348" y="948" width="5" height="78.8" fill="#800000"/>
<rect x="1380" y="948" width="5" height="75.3" fill="#800000"/>
<rect x="1412" y="948" width="5" height="74.4" fill="#800000"/>
<rect x="1444" y="948" width="5" height="66.3" fill="#800000"/>
<rect x="1476" y="948" width="5" height="64.9" fill="#800000"/>
<rect x="1508" y="948" width="5" height="64.9" fill="#800000"/>
<rect x="1540" y="948" width="5" height="63.1" fill="#800000"/>
<rect x="1572" y="948" width="5" height="61.8" fill="#800000"/>
<rect x="1604" y="948" width="5" height="21" fill="#800000"/>
<rect x="1636" y="929.1" width="5" height="17.9" fill="#00ff00"/>
<rect x="1668" y="891.9" width="5" height="55.1" fill="#00ff00"/>
<rect x="1700" y="865.2" width="5" height="81.8" fill="#00ff00"/>
<rect x="1732" y="848.9" width="5" height="98.1" fill="#00ff00"/>
<rect x="1764" y="836.7" width="5" height="110.3" fill="#00ff00"/>
<rect x="1796" y="829" width="5" height="118" fill="#00ff00"/>
<rect x="1828" y="820.8" width="5" height="126.2" fill="#00ff00"/>
<rect x="1860" y="818.1" width="5" height="128.9" fill="#00ff00"/>
<rect x="1892" y="814.9" width="5" height="132.1" fill="#00ff00"/>
<rect x="1924" y="810.8" width="5" height="136.2" fill="#00ff00"/>
<rect x="1956" y="810.8" width="5" height="136.2" fill="#00ff00"/>
<rect x="1988" y="810.8" width="5" height="136.2" fill="#00ff00"/>
<rect x="2020" y="819" width="5" height="128" fill="#008000"/>
<rect x="2052" y="822.6" width="5" height="124.4" fill="#008000"/>
<rect x="2084" y="825.8" width="5" height="121.2" fill="#008000"/>
<rect x="2116" y="829" width="5" height="118" fill="#008000"/>
<rect x="2148" y="827.2" width="5" height="119.8" fill="#00ff00"/>
<rect x="2180" y="851.2" width="5" height="95.8" fill="#008000"/>
<rect x="2212" y="858" width="5" height="89" fill="#008000"/>
<rect x="2244" y="870.7" width="5" height="76.3" fill="#008000"/>
<rect x="2276" y="882.9" width="5" height="64.1" fill="#008000"/>
<rect x="2308" y="889.7" width="5" height="57.3" fill="#008000"/>
<rect x="2340" y="894.2" width="5" height="52.8" fill="#008000"/>
<rect x="2372" y="891.9" width="5" height="55.1" fill="#00ff00"/>
<rect x="2404" y="897.8" width="5" height="49.2" fill="#008000"/>
<rect x="2436" y="901.9" width="5" height="45.1" fill="#008000"/>
<rect x="2468" y="905.1" width="5" height="41.9" fill="#008000"/>
<rect x="2500" y="912.3" width="5" height="34.7" fill="#008000"/>
<polyline fill="none" stroke="#0000ff" stroke-width="3" stroke-linejoin="round" points="294,1172.5 326,1169 358,1167 390,1169 422,1172.5 454,1181.2 486,1194.2 518,1208.1 550,1221.1 582,1232 614,1239.3 646,1243.7 678,1247.1 710,1250.6 742,1252.3 774,1253.6 806,1254.5 838,1256.7 870,1262.3 902,1274 934,1285.3 966,1297 998,1307 1030,1313 1062,1315.6 1094,1315.6 1126,1314.8 1158,1314.3 1190,1313.9 1222,1315.2 1254,1316.5 1286,1316.5 1318,1313 1350,1307.8 1382,1302.6 1414,1298.4 1446,1296.1 1478,1291.6 1510,1289.3 1542,1287 1574,1284.8 1606,1271.2 1638,1248.5 1670,1219 1702,1193.2 1734,1168.3 1766,1146.6 1798,1133 1830,1120.3 1862,1110.3 1894,1102.2 1926,1095.8 1958,1091.3 1990,1088.6 2022,1088.6 2054,1091.3 2086,1093.1 2118,1095.8 2150,1097.6 2182,1105.8 2214,1113.9 2246,1123.9 2278,1133.9 2310,1142.9 2342,1150.2 2374,1154.7 2406,1159.2 2438,1164.7 2470,1169.2 2502,1173.7"/>
<path d="M294 1214.5L299 1219.5L294 1224.5L289 1219.5Z" fill="#ffff00"/>
<path d="M326 1214.5L331 1219.5L326 1224.5L321 1219.5Z" fill="#ffff00"/>
<path d="M358 1214.5L363 1219.5L358 1224.5L353 1219.5Z" fill="#ffff00"/>
<path d="M390 1214.5L395 1219.5L390 1224.5L385 1219.5Z" fill="#ffff00"/>
<path d="M422 1214.5L427 1219.5L422 1224.5L417 1219.5Z" fill="#ffff00"/>
<path d="M454 1214.5L459 1219.5L454 1224.5L449 1219.5Z" fill="#ffff00"/>
<path d="M486 1214.5L491 1219.5L486 1224.5L481 1219.5Z" fill="#00ffff"/>
<path d="M518 1214.5L523 1219.5L518 1224.5L513 1219.5Z" fill="#00ffff"/>
<path d="M550 1214.5L555 1219.5L550 1224.5L545 1219.5Z" fill="#00ffff"/>
<path d="M582 1214.5L587 1219.5L582 1224.5L577 1219.5Z" fill="#00ffff"/>
<path d="M614 1214.5L619 1219.5L614 1224.5L609 1219.5Z" fill="#00ffff"/>
<path d="M646 1214.5L651 1219.5L646 1224.5L641 1219.5Z" fill="#00ffff"/>
<path d="M678 1214.5L683 1219.5L678 1224.5L673 1219.5Z" fill="#ffff00"/>
<path d="M710 1214.5L715 1219.5L710 1224.5L705 1219.5Z" fill="#ffff00"/>
<path d="M742 1214.5L747 1219.5L742 1224.5L737 1219.5Z" fill="#ffff00"/>
<path d="M774 1214.5L779 1219.5L774 1224.5L769 1219.5Z" fill="#ffff00"/>
<path d="M806 1214.5L811 1219.5L806 1224.5L801 1219.5Z" fill="#ffff00"/>
<path d="M838 1214.5L843 1219.5L838 1224.5L833 1219.5Z" fill="#ffff00"/>
<path d="M870 1214.5L875 1219.5L870 1224.5L865 1219.5Z" fill="#ffff00"/>
<path d="M902 1214.5L907 1219.5L902 1224.5L897 1219.5Z" fill="#ffff00"/>
<path d="M934 1214.5L939 1219.5L934 1224.5L929 1219.5Z" fill="#00ffff"/>
<path d="M966 1214.5L971 1219.5L966 1224.5L961 1219.5Z" fill="#00ffff"/>
<path d="M998 1214.5L1003 1219.5L998 1224.5L993 1219.5Z" fill="#00ffff"/>
<path d="M1030 1214.5L1035 1219.5L1030 1224.5L1025 1219.5Z" fill="#00ffff"/>
<path d="M1062 1214.5L1067 1219.5L1062 1224.5L1057 1219.5Z" fill="#00ffff"/>
<path d="M1094 1214.5L1099 1219.5L1094 1224.5L1089 1219.5Z" fill="#00ffff"/>
<path d="M1126 1214.5L1131 1219.5L1126 1224.5L1121 1219.5Z" fill="#00ffff"/>
<path d="M1158 1214.5L1163 1219.5L1158 1224.5L1153 1219.5Z" fill="#ffff00"/>
<path d="M1190 1214.5L1195 1219.5L1190 1224.5L1185 1219.5Z" fill="#ffff00"/>
<path d="M1222 1214.5L1227 1219.5L1222 1224.5L1217 1219.5Z" fill="#ffff00"/>
<path d="M1254 1214.5L1259 1219.5L1254 1224.5L1249 1219.5Z" fill="#ffff00"/>
<path d="M1286 1214.5L1291 1219.5L1286 1224.5L1281 1219.5Z" fill="#ffff00"/>
<path d="M1318 1214.5L1323 1219.5L1318 1224.5L1313 1219.5Z" fill="#ffff00"/>
<path d="M1350 1214.5L1355 1219.5L1350 1224.5L1345 1219.5Z" fill="#ffff00"/>
<path d="M1382 1214.5L1387 1219.5L1382 1224.5L1377 1219.5Z" fill="#ffff00"/>
<path d="M1414 1214.5L1419 1219.5L1414 1224.5L1409 1219.5Z" fill="#ffff00"/>
<path d="M1446 1214.5L1451 1219.5L1446 1224.5L1441 1219.5Z" fill="#ffff00"/>
<path d="M1478 1214.5L1483 1219.5L1478 1224.5L1473 1219.5Z" fill="#ffff00"/>
<path d="M1510 1214.5L1515 1219.5L1510 1224.5L1505 1219.5Z" fill="#ffff00"/>
<path d="M1542 1214.5L1547 1219.5L1542 1224.5L1537 1219.5Z" fill="#ffff00"/>
<path d="M1574 1214.5L1579 1219.5L1574 1224.5L1569 1219.5Z" fill="#ffff00"/>
<path d="M1606 1214.5L1611 1219.5L1606 1224.5L1601 1219.5Z" fill="#ffff00"/>
<path d="M1638 1214.5L1643 1219.5L1638 1224.5L1633 1219.5Z" fill="#00ffff"/>
<path d="M1670 1214.5L1675 1219.5L1670 1224.5L1665 1219.5Z" fill="#00ffff"/>
<path d="M1702 1214.5L1707 1219.5L1702 1224.5L1697 1219.5Z" fill="#00ffff"/>
<path d="M1734 1214.5L1739 1219.5L1734 1224.5L1729 1219.5Z" fill="#00ffff"/>
<path d="M1766 1214.5L1771 1219.5L1766 1224.5L1761 1219.5Z" fill="#00ffff"/>
<path d="M1798 1214.5L1803 1219.5L1798 1224.5L1793 1219.5Z" fill="#00ffff"/>
<path d="M1830 1214.5L1835 1219.5L1830 1224.5L1825 1219.5Z" fill="#00ffff"/>
<path d="M1862 1214.5L1867 1219.5L1862 1224.5L1857 1219.5Z" fill="#00ffff"/>
<path d="M1894 1214.5L1899 1219.5L1894 1224.5L1889 1219.5Z" fill="#00ffff"/>
<path d="M1926 1214.5L1931 1219.5L1926 1224.5L1921 1219.5Z" fill="#ffff00"/>
<path d="M1958 1214.5L1963 1219.5L1958 1224.5L1953 1219.5Z" fill="#ffff00"/>
<path d="M1990 1214.5L1995 1219.5L1990 1224.5L1985 1219.5Z" fill="#ffff00"/>
<path d="M2022 1214.5L2027 1219.5L2022 1224.5L2017 1219.5Z" fill="#ffff00"/>
<path d="M2054 1214.5L2059 1219.5L2054 1224.5L2049 1219.5Z" fill="#ffff00"/>
<path d="M2086 1214.5L2091 1219.5L2086 1224.5L2081 1219.5Z" fill="#ffff00"/>
<path d="M2118 1214.5L2123 1219.5L2118 1224.5L2113 1219.5Z" fill="#ffff00"/>
<path d="M2150 1214.5L2155 1219.5L2150 1224.5L2145 1219.5Z" fill="#ffff00"/>
<path d="M2182 1214.5L2187 1219.5L2182 1224.5L2177 1219.5Z" fill="#ffff00"/>
<path d="M2214 1214.5L2219 1219.5L2214 1224.5L2209 1219.5Z" fill="#ffff00"/>
<path d="M2246 1214.5L2251 1219.5L2246 1224.5L2241 1219.5Z" fill="#ffff00"/>
<path d="M2278 1214.5L2283 1219.5L2278 1224.5L2273 1219.5Z" fill="#ffff00"/>
<path d="M2310 1214.5L2315 1219.5L2310 1224.5L2305 1219.5Z" fill="#ffff00"/>
<path d="M2342 1214.5L2347 1219.5L2342 1224.5L2337 1219.5Z" fill="#ffff00"/>
<path d="M2374 1214.5L2379 1219.5L2374 1224.5L2369 1219.5Z" fill="#ffff00"/>
<path d="M2406 1214.5L2411 1219.5L2406 1224.5L2401 1219.5Z" fill="#ffff00"/>
<path d="M2438 1214.5L2443 1219.5L2438 1224.5L2433 1219.5Z" fill="#ffff00"/>
<path d="M2470 1214.5L2475 1219.5L2470 1224.5L2465 1219.5Z" fill="#ffff00"/>
<path d="M2502 1214.5L2507 1219.5L2502 1224.5L2497 1219.5Z" fill="#ffff00"/>
<circle cx="294" cy="1166" r="3" fill="#00ff00"/>
<circle cx="326" cy="1162.6" r="3" fill="#00ff00"/>
<circle cx="358" cy="1160.4" r="3" fill="#00ff00"/>
<circle cx="390" cy="1172.5" r="3" fill="#ff0000"/>
<circle cx="422" cy="1181.2" r="3" fill="#ff0000"/>
<circle cx="454" cy="1196.4" r="3" fill="#ff0000"/>
<circle cx="486" cy="1222" r="3" fill="#ff0000"/>
<circle cx="518" cy="1239.8" r="3" fill="#ff0000"/>
<circle cx="550" cy="1248.4" r="3" fill="#ff0000"/>
<circle cx="582" cy="1250.6" r="3" fill="#ff0000"/>
<circle cx="614" cy="1251.5" r="3" fill="#ff0000"/>
<circle cx="646" cy="1254.5" r="3" fill="#ff0000"/>
<circle cx="678" cy="1251.5" r="3" fill="#ff0000"/>
<circle cx="710" cy="1258.4" r="3" fill="#ff0000"/>
<circle cx="742" cy="1257.5" r="3" fill="#ff0000"/>
<circle cx="774" cy="1256.7" r="3" fill="#ff0000"/>
<circle cx="806" cy="1255.8" r="3" fill="#ff0000"/>
<circle cx="838" cy="1258.8" r="3" fill="#ff0000"/>
<circle cx="870" cy="1270.5" r="3" fill="#ff0000"/>
<circle cx="902" cy="1296.6" r="3" fill="#ff0000"/>
<circle cx="934" cy="1308.7" r="3" fill="#ff0000"/>
<circle cx="966" cy="1320.9" r="3" fill="#ff0000"/>
<circle cx="998" cy="1325.6" r="3" fill="#ff0000"/>
<circle cx="1030" cy="1325.6" r="3" fill="#ff0000"/>
<circle cx="1062" cy="1320.9" r="3" fill="#ff0000"/>
<circle cx="1094" cy="1315.6" r="3" fill="#00ff00"/>
<circle cx="1126" cy="1313.5" r="3" fill="#00ff00"/>
<circle cx="1158" cy="1313.5" r="3" fill="#00ff00"/>
<circle cx="1190" cy="1313.5" r="3" fill="#00ff00"/>
<circle cx="1222" cy="1316.5" r="3" fill="#ff0000"/>
<circle cx="1254" cy="1319.6" r="3" fill="#ff0000"/>
<circle cx="1286" cy="1315.6" r="3" fill="#00ff00"/>
<circle cx="1318" cy="1308.7" r="3" fill="#00ff00"/>
<circle cx="1350" cy="1297.9" r="3" fill="#00ff00"/>
<circle cx="1382" cy="1293.5" r="3" fill="#00ff00"/>
<circle cx="1414" cy="1293.8" r="3" fill="#00ff00"/>
<circle cx="1446" cy="1285.7" r="3" fill="#00ff00"/>
<circle cx="1478" cy="1284.8" r="3" fill="#00ff00"/>
<circle cx="1510" cy="1284.8" r="3" fill="#00ff00"/>
<circle cx="1542" cy="1282.5" r="3" fill="#00ff00"/>
<circle cx="1574" cy="1280.7" r="3" fill="#00ff00"/>
<circle cx="1606" cy="1240.8" r="3" fill="#00ff00"/>
<circle cx="1638" cy="1200.9" r="3" fill="#00ff00"/>
<circle cx="1670" cy="1163.8" r="3" fill="#00ff00"/>
<circle cx="1702" cy="1136.6" r="3" fill="#00ff00"/>
<circle cx="1734" cy="1120.7" r="3" fill="#00ff00"/>
<circle cx="1766" cy="1109" r="3" fill="#00ff00"/>
<circle cx="1798" cy="1100.8" r="3" fill="#00ff00"/>
<circle cx="1830" cy="1092.6" r="3" fill="#00ff00"/>
<circle cx="1862" cy="1089.9" r="3" fill="#00ff00"/>
<circle cx="1894" cy="1086.7" r="3" fill="#00ff00"/>
<circle cx="1926" cy="1083.1" r="3" fill="#00ff00"/>
<circle cx="1958" cy="1083.1" r="3" fill="#00ff00"/>
<circle cx="1990" cy="1083.1" r="3" fill="#00ff00"/>
<circle cx="2022" cy="1090.8" r="3" fill="#ff0000"/>
<circle cx="2054" cy="1094.5" r="3" fill="#ff0000"/>
<circle cx="2086" cy="1097.6" r="3" fill="#ff0000"/>
<circle cx="2118" cy="1100.3" r="3" fill="#ff0000"/>
<circle cx="2150" cy="1098.5" r="3" fill="#ff0000"/>
<circle cx="2182" cy="1122.5" r="3" fill="#ff0000"/>
<circle cx="2214" cy="1129.8" r="3" fill="#ff0000"/>
<circle cx="2246" cy="1142.9" r="3" fill="#ff0000"/>
<circle cx="2278" cy="1154.7" r="3" fill="#ff0000"/>
<circle cx="2310" cy="1161.5" r="3" fill="#ff0000"/>
<circle cx="2342" cy="1165.6" r="3" fill="#ff0000"/>
<circle cx="2374" cy="1163.8" r="3" fill="#ff0000"/>
<circle cx="2406" cy="1169.7" r="3" fill="#ff0000"/>
<circle cx="2438" cy="1173.7" r="3" fill="#ff0000"/>
<circle cx="2470" cy="1176.9" r="3" fill="#ff0000"/>
<circle cx="2502" cy="1184.6" r="3" fill="#ff0000"/>
</g>
<rect x="293.5" y="73.5" width="2225" height="450" fill="none" stroke="#fff" stroke-width="1" shape-rendering="crispEdges"/>
<rect x="293.5" y="525.5" width="2225" height="270" fill="none" stroke="#fff" stroke-width="1" shape-rendering="crispEdges"/>
<rect x="293.5" y="797.5" width="2225" height="270" fill="none" stroke="#fff" stroke-width="1" shape-rendering="crispEdges"/>
<rect x="293.5" y="1069.5" width="2225" height="270" fill="none" stroke="#fff" stroke-width="1" shape-rendering="crispEdges"/>
<path d="M2519 100.5H2522M2519 135.5H2522M2519 169.5H2522M2519 204.5H2522M2519 238.5H2522M2519 273.5H2522M2519 307.5H2522M2519 342.5H2522M2519 376.5H2522M2519 411.5H2522M2519 445.5H2522M2519 480.5H2522M2519 514.5H2522M2519 527.5H2521M2519 659.5H2521M2519 794.5H2521M2519 799.5H2521M2519 947.5H2521M2519 1066.5H2521M2519 1071.5H2521M2519 1219.5H2521M2519 1338.5H2521M294.5 1339V1343M358.5 1339V1343M422.5 1339V1343M486.5 1339V1343M550.5 1339V1343M614.5 1339V1343M678.5 1339V1343M742.5 1339V1343M806.5 1339V1343M870.5 1339V1343M934.5 1339V1343M998.5 1339V1343M1062.5 1339V1343M1126.5 1339V1343M1190.5 1339V1343M1254.5 1339V1343M1318.5 1339V1343M1382.5 1339V1343M1446.5 1339V1343M1510.5 1339V1343M1574.5 1339V1343M1638.5 1339V1343M1702.5 1339V1343M1766.5 1339V1343M1830.5 1339V1343M1894.5 1339V1343M1958.5 1339V1343M2022.5 1339V1343M2086.5 1339V1343M2150.5 1339V1343M2214.5 1339V1343M2278.5 1339V1343M2342.5 1339V1343M2406.5 1339V1343M2470.5 1339V1343" stroke="#fff" stroke-width="1" shape-rendering="crispEdges"/>
<rect x="2519" y="280" width="37" height="7" fill="#ff0000"/>
<rect x="2519" y="286" width="37" height="12" fill="#fff"/>
<g style="font-family:'Liberation Sans',sans-serif;font-size:11px" fill="#fff">
<text transform="translate(2525 104) scale(0.8 1)">1.3745</text>
<text transform="translate(2525 139) scale(0.8 1)">1.3725</text>
<text transform="translate(2525 173) scale(0.8 1)">1.3705</text>
<text transform="translate(2525 208) scale(0.8 1)">1.3685</text>
<text transform="translate(2525 242) scale(0.8 1)">1.3665</text>
<text transform="translate(2525 277) scale(0.8 1)">1.3645</text>
<text transform="translate(2525 311) scale(0.8 1)">1.3625</text>
<text transform="translate(2525 346) scale(0.8 1)">1.3605</text>
<text transform="translate(2525 380) scale(0.8 1)">1.3585</text>
<text transform="translate(2525 415) scale(0.8 1)">1.3565</text>
<text transform="translate(2525 449) scale(0.8 1)">1.3545</text>
<text transform="translate(2525 484) scale(0.8 1)">1.3525</text>
<text transform="translate(2525 518) scale(0.8 1)">1.3505</text>
<text transform="translate(2522 536.5) scale(0.8 1)">50</text>
<text transform="translate(2522 663.5) scale(0.8 1)">0.00</text>
<text transform="translate(2522 792.5) scale(0.8 1)">-50</text>
<text transform="translate(2522 808.5) scale(0.8 1)">35.7939</text>
<text transform="translate(2522 951.5) scale(0.8 1)">0.00</text>
<text transform="translate(2522 1064.5) scale(0.8 1)">-28.8084</text>
<text transform="translate(2522 1080.5) scale(0.8 1)">35.7939</text>
<text transform="translate(2522 1223.5) scale(0.8 1)">0.00</text>
<text transform="translate(2522 1336) scale(0.8 1)">-28.8084</text>
<text transform="translate(294 1352) scale(0.822 1)">14 Jan 2014</text>
<text transform="translate(358 1352) scale(0.822 1)">15 Jan 00:00</text>
<text transform="translate(422 1352) scale(0.822 1)">15 Jan 08:00</text>
<text transform="translate(486 1352) scale(0.822 1)">15 Jan 16:00</text>
<text transform="translate(550 1352) scale(0.822 1)">16 Jan 00:00</text>
<text transform="translate(614 1352) scale(0.822 1)">16 Jan 08:00</text>
<text transform="translate(678 1352) scale(0.822 1)">16 Jan 16:00</text>
<text transform="translate(742 1352) scale(0.822 1)">17 Jan 00:00</text>
<text transform="translate(806 1352) scale(0.822 1)">17 Jan 08:00</text>
<text transform="translate(870 1352) scale(0.822 1)">17 Jan 16:00</text>
<text transform="translate(934 1352) scale(0.822 1)">20 Jan 00:00</text>
<text transform="translate(998 1352) scale(0.822 1)">20 Jan 08:00</text>
<text transform="translate(1062 1352) scale(0.822 1)">20 Jan 16:00</text>
<text transform="translate(1126 1352) scale(0.822 1)">21 Jan 00:00</text>
<text transform="translate(1190 1352) scale(0.822 1)">21 Jan 08:00</text>
<text transform="translate(1254 1352) scale(0.822 1)">21 Jan 16:00</text>
<text transform="translate(1318 1352) scale(0.822 1)">22 Jan 00:00</text>
<text transform="translate(1382 1352) scale(0.822 1)">22 Jan 08:00</text>
<text transform="translate(1446 1352) scale(0.822 1)">22 Jan 16:00</text>
<text transform="translate(1510 1352) scale(0.822 1)">23 Jan 00:00</text>
<text transform="translate(1574 1352) scale(0.822 1)">23 Jan 08:00</text>
<text transform="translate(1638 1352) scale(0.822 1)">23 Jan 16:00</text>
<text transform="translate(1702 1352) scale(0.822 1)">24 Jan 00:00</text>
<text transform="translate(1766 1352) scale(0.822 1)">24 Jan 08:00</text>
<text transform="translate(1830 1352) scale(0.822 1)">24 Jan 16:00</text>
<text transform="translate(1894 1352) scale(0.822 1)">27 Jan 00:00</text>
<text transform="translate(1958 1352) scale(0.822 1)">27 Jan 08:00</text>
<text transform="translate(2022 1352) scale(0.822 1)">27 Jan 16:00</text>
<text transform="translate(2086 1352) scale(0.822 1)">28 Jan 00:00</text>
<text transform="translate(2150 1352) scale(0.822 1)">28 Jan 08:00</text>
<text transform="translate(2214 1352) scale(0.822 1)">28 Jan 16:00</text>
<text transform="translate(2278 1352) scale(0.822 1)">29 Jan 00:00</text>
<text transform="translate(2342 1352) scale(0.822 1)">29 Jan 08:00</text>
<text transform="translate(2406 1352) scale(0.822 1)">29 Jan 16:00</text>
<text transform="translate(2470 1352) scale(0.822 1)">30 Jan 00:00</text>
<text transform="translate(298 538.5) scale(0.839 1)">iRatio(10,3,3) 25.8216 22.3133</text>
<text transform="translate(298 810.5) scale(0.882 1)">Navigator #1 14.1894</text>
<text transform="translate(298 1082.5) scale(0.86 1)">Navigator #2 0.0000 9.8647 14.1894</text>
<text transform="translate(309 85) scale(0.848 1)">EURUSD,H4&#160;&#160;1.3618 1.3640 1.3618 1.3634</text>
<text x="296" y="507.5" style="font-size:12px">korSigMonitor v.001Test1 kor4x@yahoo.com</text>
</g>
<text transform="translate(2525 296) scale(0.8 1)" style="font-family:'Liberation Sans',sans-serif;font-size:11px" fill="#000">1.3634</text>
<path d="M294 80.5H308" stroke="#008000" stroke-width="2"/>
<path d="M297 84L300.5 80L304 84Z" fill="#fff"/>
</svg>
<div class="a" style="left:297px;top:89px;width:175px;height:48px;background:#000"></div>
<div class="a" style="left:297px;top:89px;width:41px;height:21px;background:linear-gradient(#f25a5a,#d83030)"></div>
<div class="a" style="left:301px;top:108px;width:33px;height:1px;background:#f4a0a0"></div>
<div class="tx" style="left:306px;top:94px;font-size:11px;color:#fff">SELL</div>
<div class="a" style="left:431px;top:89px;width:41px;height:21px;background:linear-gradient(#f25a5a,#d83030)"></div>
<div class="a" style="left:436px;top:108px;width:33px;height:1px;background:#f4a0a0"></div>
<div class="tx" style="left:442px;top:94px;font-size:11px;color:#fff">BUY</div>
<div class="a" style="left:340px;top:89px;width:89px;height:19px;background:#fff;border:1px solid #aaa"></div>
<div class="a" style="left:341px;top:90px;width:16px;height:17px;background:linear-gradient(#f4f4f4,#d0d0d0);border-right:1px solid #bbb"></div>
<div class="a" style="left:412px;top:90px;width:16px;height:17px;background:linear-gradient(#f4f4f4,#d0d0d0);border-left:1px solid #bbb"></div>
<svg class="a" style="left:346px;top:96px" width="7" height="5"><path d="M0 0h7L3.5 4z" fill="#5a70b0"/></svg>
<svg class="a" style="left:417px;top:96px" width="7" height="5"><path d="M0 4h7L3.5 0z" fill="#5a70b0"/></svg>
<div class="tx" style="left:386px;top:93px;font-size:12px;color:#000">0.10</div>
<div class="a" style="left:297px;top:110px;width:87px;height:27px;background:linear-gradient(#e03434,#b40c0c)"></div>
<div class="a" style="left:386px;top:110px;width:86px;height:27px;background:linear-gradient(#e03434,#b40c0c)"></div>
<div class="tx" style="left:310px;top:121px;font-size:11px;font-weight:bold;color:#fff">1.36</div>
<div class="tx" style="left:335px;top:114px;font-size:22px;color:#fff">34</div>
<div class="tx" style="left:398px;top:121px;font-size:11px;font-weight:bold;color:#fff">1.36</div>
<div class="tx" style="left:423px;top:114px;font-size:22px;color:#fff">36</div>
<svg class="a" style="left:1287px;top:372px" width="13" height="20" viewBox="0 0 13 20"><path d="M0.5 0.5V16.5L4.5 12.5L7.5 19L10 18L7 11.5H12.5Z" fill="#fff" stroke="#000" stroke-width="1"/></svg>
<svg class="a" style="left:2535px;top:1295px" width="25" height="52"><path d="M1 3Q1 0 4 0H25V52L1 38Z" fill="#f0f0f0" stroke="#c8c8c8"/><rect x="5" y="5" width="18" height="20" rx="3" fill="#1e7ae0"/><circle cx="14" cy="15" r="6.5" fill="#e8eef6"/><path d="M9 15l3-3v2h4v-2l3 3-3 3v-2h-4v2z" fill="#1e7ae0"/></svg>
<div class="a" style="left:746px;top:493px;width:489px;height:296px;border:1px solid #5d6f86;border-radius:6px 6px 0 0;background:linear-gradient(#97b2d2 0px,#b8d0ea 29px,#bfd5ec 100%);box-shadow:0 0 0 1px rgba(255,255,255,.6) inset"></div>
<div class="a" style="left:753px;top:522px;width:475px;height:259px;background:#f0f0f0;border:1px solid #8fa6c2"></div>
<svg class="a" style="left:755px;top:502px" width="17" height="16" viewBox="0 0 17 16"><rect x="0.5" y="0.5" width="12" height="10" fill="#eef5ff" stroke="#7aa6d8"/><rect x="0.5" y="0.5" width="12" height="2" fill="#7aa6d8"/></svg>
<div class="fi" style="left:759px;top:505px"><i>f</i><b></b></div>
<div class="tx" style="left:775px;top:504px;font-size:11px;color:#000">Indicators on EURUSD,H4</div>
<div class="a" style="left:1162px;top:502px;width:31px;height:17px;border:1px solid #4e5f78;border-radius:3px;background:linear-gradient(#c4d6ec 0,#b8cde6 45%,#98b2d2 50%,#b0c8e4)"></div>
<div class="tx" style="left:1174px;top:505px;font-size:13px;font-weight:bold;color:#fff;text-shadow:0 0 1px #223,0 0 1px #223,0 0 1px #223">?</div>
<div class="a" style="left:1195px;top:502px;width:31px;height:17px;border:1px solid #4a1a20;border-radius:3px;background:linear-gradient(#eba898 0,#e0907c 45%,#c0402a 50%,#d87a64)"></div>
<svg class="a" style="left:1205px;top:506px" width="12" height="10"><path d="M1.5 1.5l9 7M10.5 1.5l-9 7" stroke="#fff" stroke-width="2.4"/></svg>
<div class="a" style="left:761px;top:530px;width:357px;height:241px;background:#fff;border:1px solid #828790"></div>
<div class="dv" style="left:775px;top:550px;height:189px"></div>
<div class="ex" style="left:771px;top:537px"></div>
<div class="dh" style="left:781px;top:541px;width:6px"></div>
<svg class="a" style="left:788px;top:533px" width="17" height="16" viewBox="0 0 17 16"><rect x="0.5" y="1.5" width="15" height="13" fill="#fff" stroke="#3a6fd6"/><rect x="0.5" y="1.5" width="15" height="3" fill="#3a6fd6"/><path d="M3 12 Q5.5 5 8 9 T13 6" fill="none" stroke="#3a6fd6" stroke-width="1.2"/></svg>
<div class="ti" style="left:809px;top:535px">Main chart</div>
<div class="dh" style="left:797px;top:559px;width:12px"></div>
<div class="fi" style="left:810px;top:551px"><i>f</i><b></b></div>
<div class="ti" style="left:830px;top:553px">TAS_MT4_Boxes</div>
<div class="dh" style="left:797px;top:577px;width:12px"></div>
<div class="fi" style="left:810px;top:569px"><i>f</i><b></b></div>
<div class="ti" style="left:830px;top:571px">TAS_MT4_FloatingPCLs</div>
<div class="dh" style="left:797px;top:595px;width:12px"></div>
<div class="fi" style="left:810px;top:587px"><i>f</i><b></b></div>
<div class="ti" style="left:830px;top:589px">TAS_MT4_MarketMap</div>
<div class="dh" style="left:797px;top:613px;width:12px"></div>
<div class="fi" style="left:810px;top:605px"><i>f</i><b></b></div>
<div class="ti" style="left:830px;top:607px">TAS_MT4_StaticPCLs</div>
<div class="dh" style="left:797px;top:631px;width:12px"></div>
<div class="fi" style="left:810px;top:623px"><i>f</i><b></b></div>
<div class="ti" style="left:830px;top:625px">TAS_Vega Bars&amp;Candles</div>
<div class="dh" style="left:797px;top:649px;width:12px"></div>
<div class="fi" style="left:810px;top:641px"><i>f</i><b></b></div>
<div class="ti" style="left:830px;top:643px">TAS_Vega Candles</div>
<div class="ex" style="left:771px;top:663px"></div>
<div class="dh" style="left:781px;top:667px;width:6px"></div>
<svg class="a" style="left:788px;top:659px" width="17" height="16" viewBox="0 0 17 16"><rect x="0.5" y="1.5" width="15" height="13" fill="#fff" stroke="#3a6fd6"/><rect x="0.5" y="1.5" width="15" height="3" fill="#3a6fd6"/><path d="M3 12 Q5.5 5 8 9 T13 6" fill="none" stroke="#3a6fd6" stroke-width="1.2"/></svg>
<div class="ti" style="left:809px;top:661px">Indicator window 1</div>
<div class="dh" style="left:797px;top:685px;width:12px"></div>
<div class="fi" style="left:810px;top:677px"><i>f</i><b></b></div>
<div class="ti" style="left:830px;top:679px">TAS_MT4_iRatio</div>
<div class="ex" style="left:771px;top:699px"></div>
<div class="dh" style="left:781px;top:703px;width:6px"></div>
<svg class="a" style="left:788px;top:695px" width="17" height="16" viewBox="0 0 17 16"><rect x="0.5" y="1.5" width="15" height="13" fill="#fff" stroke="#3a6fd6"/><rect x="0.5" y="1.5" width="15" height="3" fill="#3a6fd6"/><path d="M3 12 Q5.5 5 8 9 T13 6" fill="none" stroke="#3a6fd6" stroke-width="1.2"/></svg>
<div class="ti" style="left:809px;top:697px">Indicator window 2</div>
<div class="dh" style="left:797px;top:721px;width:12px"></div>
<div class="fi" style="left:810px;top:713px"><i>f</i><b></b></div>
<div class="ti" style="left:830px;top:715px">TAS_MT4_Navigator_1</div>
<div class="ex" style="left:771px;top:735px"></div>
<div class="dh" style="left:781px;top:739px;width:6px"></div>
<svg class="a" style="left:788px;top:731px" width="17" height="16" viewBox="0 0 17 16"><rect x="0.5" y="1.5" width="15" height="13" fill="#fff" stroke="#3a6fd6"/><rect x="0.5" y="1.5" width="15" height="3" fill="#3a6fd6"/><path d="M3 12 Q5.5 5 8 9 T13 6" fill="none" stroke="#3a6fd6" stroke-width="1.2"/></svg>
<div class="ti" style="left:809px;top:733px">Indicator window 3</div>
<div class="dh" style="left:797px;top:757px;width:12px"></div>
<div class="fi" style="left:810px;top:749px"><i>f</i><b></b></div>
<div class="ti" style="left:830px;top:751px">TAS_MT4_Navigator_II</div>
<div class="dv" style="left:796px;top:550px;height:99px"></div>
<div class="dv" style="left:796px;top:676px;height:9px"></div>
<div class="dv" style="left:796px;top:712px;height:9px"></div>
<div class="dv" style="left:796px;top:748px;height:9px"></div>
<div class="a" style="left:1127px;top:531px;width:93px;height:21px;border:1px solid #c3c3c3;border-radius:3px;background:#f4f4f4"></div>
<div class="tx" style="left:1127px;top:536px;width:93px;text-align:center;font-size:11px;color:#a0a0a0">Edit</div>
<div class="a" style="left:1127px;top:559px;width:93px;height:21px;border:1px solid #c3c3c3;border-radius:3px;background:#f4f4f4"></div>
<div class="tx" style="left:1127px;top:564px;width:93px;text-align:center;font-size:11px;color:#a0a0a0">Delete</div>
<div class="a" style="left:1127px;top:749px;width:93px;height:21px;border:1px solid #3c7fb1;border-radius:3px;background:linear-gradient(#f2f2f2 0,#ebebeb 50%,#dddddd 51%,#cfcfcf);box-shadow:inset 0 0 0 1px #48d0fa"></div>
<div class="tx" style="left:1127px;top:754px;width:93px;text-align:center;font-size:11px;color:#000">Close</div>
</body></html>
